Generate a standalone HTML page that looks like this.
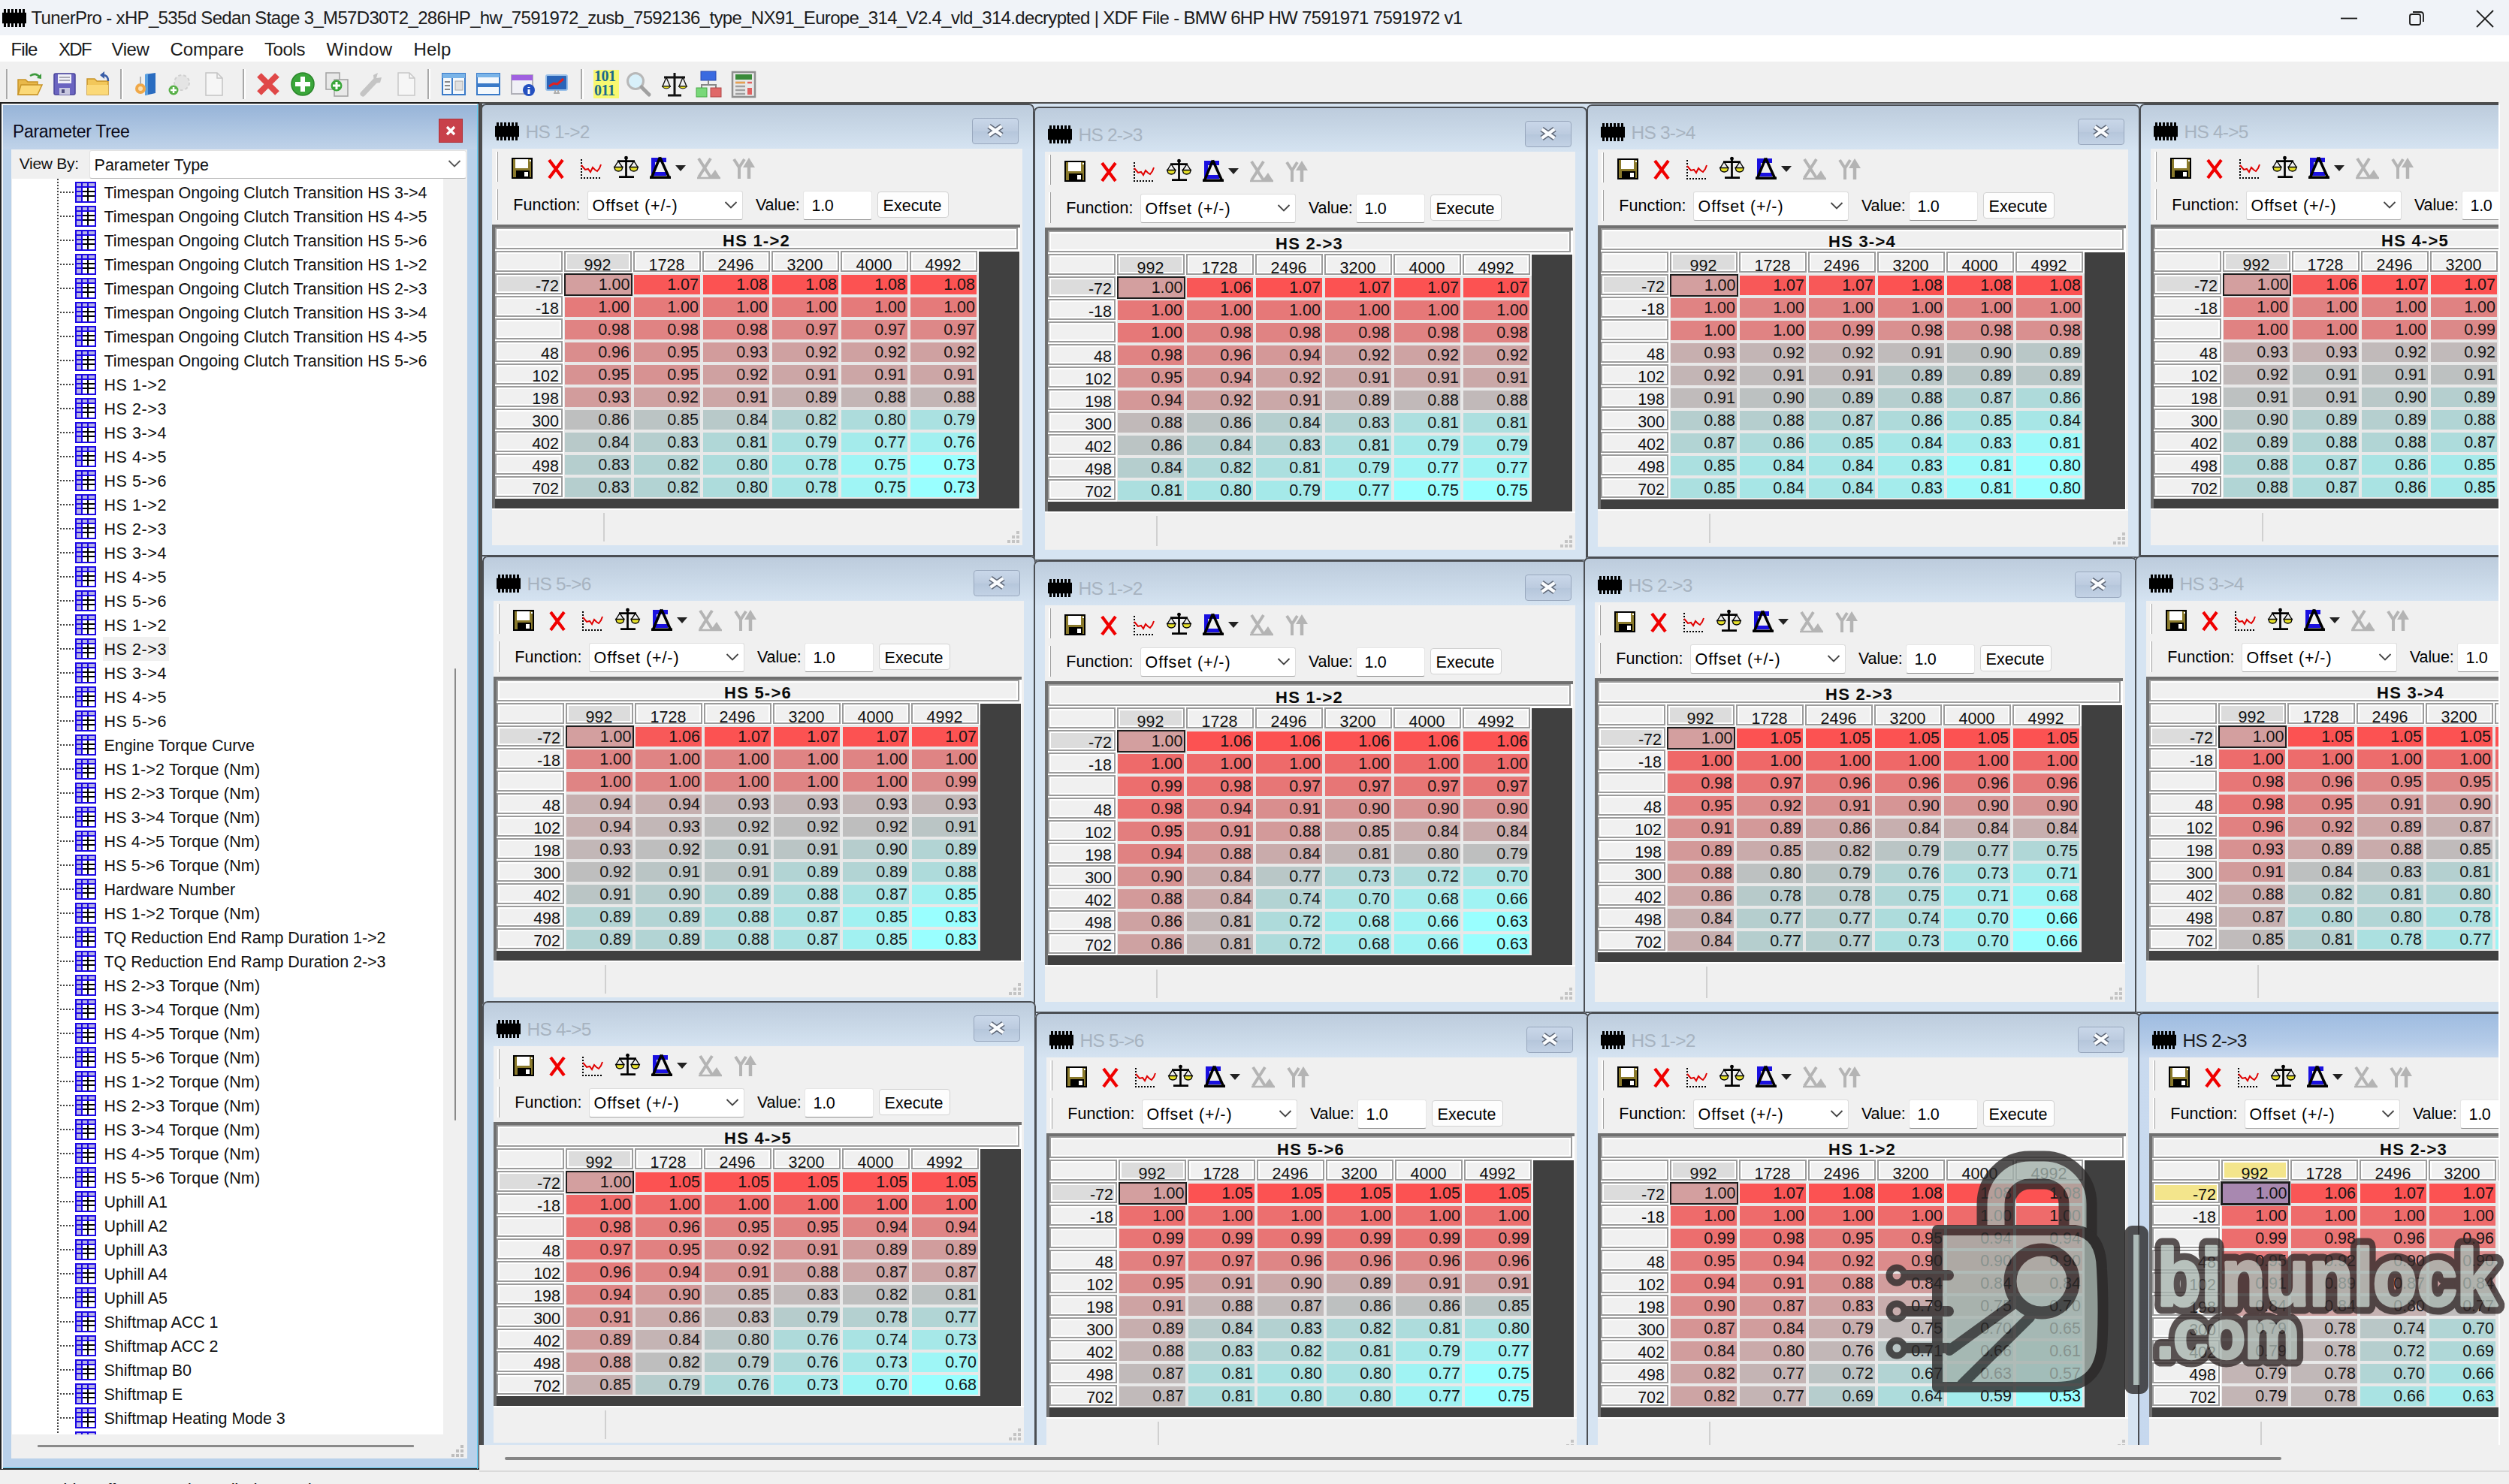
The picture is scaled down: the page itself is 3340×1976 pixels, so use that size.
<!DOCTYPE html><html><head><meta charset="utf-8"><title>TunerPro</title><style>
html,body{margin:0;padding:0;}
body{width:3340px;height:1976px;overflow:hidden;background:#f0f0f0;position:relative;font-family:"Liberation Sans",sans-serif;color:#111;}
div,svg,span.t,i,b{position:absolute;}
span.t{white-space:pre;line-height:1;}
svg{overflow:visible;}
.cw{width:737px;overflow:hidden;border-radius:7px 7px 0 0;background:linear-gradient(#bccbdc 0,#cad9e8 35px,#d6e4f2 62px,#d6e4f2 100%);}
.cw.act{background:linear-gradient(#9dbbe0 0,#b4cbe8 40px,#c9daef 62px,#c6d8ee 100%);}
.bd{left:0;top:0;right:0;bottom:0;border:2px solid #4b4e53;border-radius:7px 7px 0 0;}
.xb{left:653.5px;top:18.5px;width:62px;height:35px;border:1.5px solid #98a7bd;border-radius:4px;box-sizing:border-box;background:linear-gradient(#c9d7e9,#bccbdf 50%,#b5c6db 51%,#c3d2e5);}
.cl{left:15px;top:60px;width:706px;background:#f0f0f0;overflow:hidden;}
.gp{left:5px;width:2px;background:#fff;border-right:1.5px solid #a0a0a0;}
.cb{left:127px;top:56px;width:206.5px;height:38.5px;background:#fff;border:1px solid #dcdcdc;border-bottom-color:#a8a8a8;border-radius:3px;box-sizing:border-box;}
.vi{left:413.5px;top:55.6px;width:92px;height:39.4px;background:#fff;border:1px solid #e6e6e6;border-bottom:1.5px solid #909090;border-radius:3px;box-sizing:border-box;}
.eb{left:513.2px;top:56.8px;width:95px;height:35.2px;background:#fdfdfd;border:1px solid #d2d2d2;border-radius:4px;box-sizing:border-box;}
.tf{left:0;top:100.5px;width:702.5px;height:378px;background:#fff;border-top:4px solid #707070;border-left:4px solid #707070;box-sizing:border-box;}
.dg{left:95.5px;top:164.5px;width:552px;height:301.5px;background:#e8e8e8;}
.dk1{left:647.5px;top:137px;width:54px;height:341.5px;background:#404040;}
.dk2{left:3.5px;top:466px;width:698px;height:12.5px;background:#404040;}
.tc{left:3.5px;top:104.5px;width:696px;height:29.5px;background:#f0f0f0;border:2px solid #9c9c9c;box-shadow:inset 0 0 0 2px #fff;box-sizing:border-box;}
.rw{left:0;width:647px;height:28px;}
.h{width:90px;height:28px;background:#f0f0f0;border:2px solid #9c9c9c;box-shadow:inset 0 0 0 2px #fff;box-sizing:border-box;overflow:hidden;font-size:21.5px;}
.h b{font-weight:normal;left:0;right:0;top:2px;line-height:26px;text-align:center;white-space:pre;}
.rh{left:3.5px;width:90px;}
.rh b{text-align:right;right:2.5px;top:2px;}
.sel{background:#dcdcdc;}
.act .sel{background:#f3e58c;}
.c{top:2px;width:86.3px;padding-right:2.2px;height:26px;line-height:26px;font-size:21.5px;font-style:normal;text-align:right;color:#151515;white-space:pre;}
.k0{left:96.7px}.k1{left:188.7px}.k2{left:280.7px}.k3{left:372.7px}.k4{left:464.7px}.k5{left:556.7px}
.h.k0{left:95.5px}.h.k1{left:187.5px}.h.k2{left:279.5px}.h.k3{left:371.5px}.h.k4{left:463.5px}.h.k5{left:555.5px}
.sc{left:95.7px;top:0;width:87px;height:25.6px;line-height:26px;padding-right:2px;width:85.8px;background:#d39f9f;border:2px solid #1e1e1e;}
.act .sc{background:#a888b0;border:3px solid #1e1e1e;left:94.7px;top:-1px;line-height:26px;}
.sb1{left:0;top:479px;width:706px;height:1.5px;background:#fff;}
.sb2{left:148px;top:485px;width:1.5px;background:#d0d0d0;}
.ti{width:28px;height:28px;background:linear-gradient(#fff,#fff) 10px 8px/6px 4px no-repeat,linear-gradient(#fff,#fff) 18px 8px/8px 4px no-repeat,linear-gradient(#fff,#fff) 10px 14px/6px 4px no-repeat,linear-gradient(#fff,#fff) 18px 14px/8px 4px no-repeat,linear-gradient(#fff,#fff) 10px 20px/6px 6px no-repeat,linear-gradient(#fff,#fff) 18px 20px/8px 6px no-repeat,linear-gradient(#b6b2e8,#b6b2e8) 2px 2px/6px 4px no-repeat,linear-gradient(#b6b2e8,#b6b2e8) 10px 2px/6px 4px no-repeat,linear-gradient(#b6b2e8,#b6b2e8) 18px 2px/8px 4px no-repeat,linear-gradient(#b6b2e8,#b6b2e8) 2px 8px/6px 4px no-repeat,linear-gradient(#b6b2e8,#b6b2e8) 2px 14px/6px 4px no-repeat,linear-gradient(#b6b2e8,#b6b2e8) 2px 20px/6px 6px no-repeat,linear-gradient(#000,#000) 10px 8px/16px 18px no-repeat,#1c08e4;}</style></head><body><div style="left:0.0px;top:0.0px;width:3340.0px;height:47.0px;background:#f0f3f8;"></div>
<svg style="left:2.5px;top:11.5px;" width="32" height="24" viewBox="0 0 32 24"><rect x="2.0" y="0" width="3.0" height="24" fill="#000"/><rect x="7.0" y="0" width="3.0" height="24" fill="#000"/><rect x="12.0" y="0" width="3.0" height="24" fill="#000"/><rect x="17.0" y="0" width="3.0" height="24" fill="#000"/><rect x="22.0" y="0" width="3.0" height="24" fill="#000"/><rect x="27.0" y="0" width="3.0" height="24" fill="#000"/><rect x="0" y="4.8" width="32" height="14.4" fill="#000"/></svg>
<span class="t" style="left:41.5px;top:12px;font-size:24px;color:#1a1a1a;letter-spacing:-0.67px;">TunerPro - xHP_535d Sedan Stage 3_M57D30T2_286HP_hw_7591972_zusb_7592136_type_NX91_Europe_314_V2.4_vld_314.decrypted | XDF File - BMW 6HP HW 7591971 7591972 v1</span>
<svg style="left:3112.0px;top:10.0px;" width="30" height="30" viewBox="0 0 30 30"><path d="M4 14.5 H26" stroke="#1a1a1a" stroke-width="1.8"/></svg>
<svg style="left:3202.0px;top:10.0px;" width="30" height="30" viewBox="0 0 30 30"><rect x="6" y="9" width="14" height="14" rx="2.5" fill="none" stroke="#1a1a1a" stroke-width="1.8"/><path d="M10 6 H20 Q24 6 24 10 V19" fill="none" stroke="#1a1a1a" stroke-width="1.8"/></svg>
<svg style="left:3293.0px;top:10.0px;" width="30" height="30" viewBox="0 0 30 30"><path d="M4 4 L26 26 M26 4 L4 26" stroke="#1a1a1a" stroke-width="1.8"/></svg>
<div style="left:0.0px;top:47.0px;width:3340.0px;height:35.0px;background:#ffffff;"></div>
<span class="t" style="left:14.5px;top:54px;font-size:24px;color:#1a1a1a;letter-spacing:-0.92px;">File</span>
<span class="t" style="left:78.0px;top:54px;font-size:24px;color:#1a1a1a;letter-spacing:-1.67px;">XDF</span>
<span class="t" style="left:148.5px;top:54px;font-size:24px;color:#1a1a1a;letter-spacing:-0.40px;">View</span>
<span class="t" style="left:226.5px;top:54px;font-size:24px;color:#1a1a1a;letter-spacing:-0.10px;">Compare</span>
<span class="t" style="left:352.0px;top:54px;font-size:24px;color:#1a1a1a;letter-spacing:-0.41px;">Tools</span>
<span class="t" style="left:434.5px;top:54px;font-size:24px;color:#1a1a1a;letter-spacing:0.44px;">Window</span>
<span class="t" style="left:550.5px;top:54px;font-size:24px;color:#1a1a1a;letter-spacing:0.16px;">Help</span>
<div style="left:0.0px;top:82.0px;width:3340.0px;height:54.0px;background:#f0f0f0;"></div>
<svg style="left:21.5px;top:94.0px;" width="36" height="36" viewBox="0 0 36 36"><path d="M2 12 H12 L15 15 H28 V32 H2 Z" fill="#e8b84a" stroke="#c89428" stroke-width="1.5"/><path d="M6 19 H34 L28 32 H2 Z" fill="#fbd978" stroke="#c89428" stroke-width="1.5"/><path d="M18 7 Q26 2 31 9" stroke="#3c9a3c" stroke-width="2.5" fill="none"/><path d="M27 10 L33 11 L33 4 Z" fill="#3c9a3c"/></svg>
<svg style="left:67.5px;top:94.0px;" width="36" height="36" viewBox="0 0 36 36"><rect x="4" y="4" width="28" height="28" rx="2" fill="#6a64c0" stroke="#4a449a" stroke-width="1.5"/><rect x="9" y="5" width="18" height="12" fill="#f0f0f8"/><path d="M11 9 H25 M11 13 H25" stroke="#9090a0" stroke-width="1.5"/><rect x="11" y="23" width="14" height="9" fill="#c8c8e0"/><rect x="14" y="25" width="4" height="5" fill="#505080"/></svg>
<svg style="left:113.5px;top:94.0px;" width="36" height="36" viewBox="0 0 36 36"><path d="M2 11 H12 L15 14 H30 V32 H2 Z" fill="#f2c75a" stroke="#c89428" stroke-width="1.5"/><path d="M2 19 H30 V32 H2 Z" fill="#fbd978"/><path d="M30 14 Q30 6 23 6" stroke="#3a5ea8" stroke-width="2.5" fill="none"/><path d="M25 1 L19 6 L25 11 Z" fill="#3a5ea8"/></svg>
<svg style="left:177.0px;top:94.0px;" width="36" height="36" viewBox="0 0 36 36"><path d="M16 5 L30 3 V30 L16 33 Z" fill="#2a6cc0"/><path d="M16 5 L20 4 V32 L16 33 Z" fill="#5aa0e0"/><circle cx="10" cy="24" r="7" fill="#f0a848"/><circle cx="10" cy="24" r="3" fill="#fbe0b0"/><path d="M10 8 V18" stroke="#b0b0b0" stroke-width="2"/></svg>
<svg style="left:221.0px;top:94.0px;" width="36" height="36" viewBox="0 0 36 36"><circle cx="21" cy="16" r="10" fill="#e4e4e4" stroke="#d0d0d0" stroke-width="2" stroke-dasharray="4 3"/><circle cx="10" cy="26" r="6.5" fill="#58b048"/><path d="M10 22 V30 M6 26 H14" stroke="#fff" stroke-width="2.5"/></svg>
<svg style="left:267.0px;top:94.0px;" width="36" height="36" viewBox="0 0 36 36"><path d="M7 3 H22 L29 10 V33 H7 Z" fill="#f6f6f6" stroke="#c4c4c4" stroke-width="1.5"/><path d="M22 3 V10 H29" fill="none" stroke="#c4c4c4" stroke-width="1.5"/></svg>
<svg style="left:339.0px;top:94.0px;" width="36" height="36" viewBox="0 0 36 36"><path d="M6 6 L30 30 M30 6 L6 30" stroke="#e04848" stroke-width="8" stroke-linecap="butt"/></svg>
<svg style="left:385.0px;top:94.0px;" width="36" height="36" viewBox="0 0 36 36"><circle cx="18" cy="18" r="15" fill="#3aa63a" stroke="#2a862a" stroke-width="1.5"/><path d="M18 8 V28 M8 18 H28" stroke="#fff" stroke-width="6"/></svg>
<svg style="left:431.0px;top:94.0px;" width="36" height="36" viewBox="0 0 36 36"><rect x="3" y="3" width="18" height="22" fill="#e8e8e8" stroke="#a0a0a0" stroke-width="1.5"/><rect x="14" y="12" width="18" height="22" fill="#e8e8e8" stroke="#a0a0a0" stroke-width="1.5"/><circle cx="17" cy="20" r="7.5" fill="#3aa63a"/><path d="M17 15 V25 M12 20 H22" stroke="#fff" stroke-width="3"/></svg>
<svg style="left:477.0px;top:94.0px;" width="36" height="36" viewBox="0 0 36 36"><path d="M6 31 L22 14" stroke="#c4c4c4" stroke-width="7" stroke-linecap="round"/><path d="M20 6 L26 3 L24 10 L31 9 L29 16 L21 17 Z" fill="#c4c4c4"/></svg>
<svg style="left:523.0px;top:94.0px;" width="36" height="36" viewBox="0 0 36 36"><path d="M7 3 H22 L29 10 V33 H7 Z" fill="#f6f6f6" stroke="#c8c8c8" stroke-width="1.5"/><path d="M22 3 V10 H29" fill="none" stroke="#c8c8c8" stroke-width="1.5"/></svg>
<svg style="left:586.0px;top:94.0px;" width="36" height="36" viewBox="0 0 36 36"><rect x="3" y="4" width="30" height="28" fill="#f4f8fc" stroke="#3a7ac8" stroke-width="2"/><rect x="3" y="4" width="30" height="6" fill="#7ab4e8"/><path d="M16 10 V32" stroke="#3a7ac8" stroke-width="2"/><path d="M6 15 H13 M6 20 H13 M6 25 H13" stroke="#888" stroke-width="2"/><rect x="20" y="14" width="10" height="12" fill="#e0e0e0" stroke="#aaa"/></svg>
<svg style="left:632.0px;top:94.0px;" width="36" height="36" viewBox="0 0 36 36"><rect x="3" y="4" width="30" height="28" fill="#f4f8fc" stroke="#3a7ac8" stroke-width="2"/><rect x="3" y="4" width="30" height="5" fill="#7ab4e8"/><rect x="3" y="17" width="30" height="5" fill="#3a7ac8"/></svg>
<svg style="left:678.0px;top:94.0px;" width="36" height="36" viewBox="0 0 36 36"><rect x="3" y="6" width="28" height="25" fill="#f0f0f6" stroke="#b0b0b8" stroke-width="2"/><rect x="3" y="6" width="28" height="7" fill="#a060e0"/><circle cx="26" cy="26" r="8" fill="#2450c0"/><path d="M26 22 V23 M26 25 V31" stroke="#fff" stroke-width="3"/></svg>
<svg style="left:723.0px;top:94.0px;" width="36" height="36" viewBox="0 0 36 36"><rect x="4" y="6" width="28" height="20" rx="2" fill="#2a64b8" stroke="#9ac0e8" stroke-width="2"/><path d="M8 21 L14 17 L19 18 L27 11" stroke="#e02020" stroke-width="3" fill="none"/><path d="M14 30 H22 M16 26 V30 M20 26 V30" stroke="#b0b0b0" stroke-width="2"/></svg>
<div style="left:790px;top:93px;width:34px;height:38px;background:#f8f870;"></div>
<span class="t" style="left:791px;top:92px;font-size:20px;line-height:19px;font-family:'Liberation Serif',serif;font-weight:bold;color:#1a6a8a;letter-spacing:-0.5px;">101<br>011</span>
<svg style="left:832.0px;top:94.0px;" width="36" height="36" viewBox="0 0 36 36"><circle cx="14" cy="14" r="10.5" fill="#d8f0fa" stroke="#b8b8b8" stroke-width="3"/><path d="M22 22 L32 32" stroke="#a0a0a0" stroke-width="5" stroke-linecap="round"/></svg>
<svg style="left:880.0px;top:94.0px;" width="36" height="36" viewBox="0 0 36 36"><path d="M18 3 V32 M9 33 H27 M4 9 H32" stroke="#111" stroke-width="3" fill="none"/><path d="M7 9 L2 21 H12 Z M29 9 L24 21 H34 Z" stroke="#111" stroke-width="1.4" fill="none"/><path d="M1 21 H13 Q7 27 1 21 Z M23 21 H35 Q29 27 23 21 Z" fill="#e8e020" stroke="#111" stroke-width="1"/></svg>
<svg style="left:925.0px;top:94.0px;" width="36" height="36" viewBox="0 0 36 36"><rect x="8" y="1" width="20" height="12" fill="#3a6ae0" stroke="#2a4ab0"/><path d="M18 13 V19 M9 24 V19 H28 V24" stroke="#888" stroke-width="2" fill="none"/><rect x="2" y="23" width="14" height="12" fill="#78d878" stroke="#48a848"/><rect x="21" y="23" width="14" height="12" fill="#e06868" stroke="#b04848"/></svg>
<svg style="left:972.0px;top:94.0px;" width="36" height="36" viewBox="0 0 36 36"><rect x="3" y="2" width="30" height="33" fill="#e8e8e8" stroke="#909090" stroke-width="2.5"/><rect x="7" y="5" width="22" height="7" fill="#3a8a3a"/><path d="M7 16 H20 M7 21 H20 M7 26 H20 M7 31 H20" stroke="#a0a0a0" stroke-width="2.5"/><path d="M7 16 H20" stroke="#e8a050" stroke-width="2.5"/><rect x="23" y="23" width="6" height="9" fill="#e06060"/><path d="M23 16 H29" stroke="#e06060" stroke-width="2.5"/></svg>
<div style="left:7.5px;top:92.0px;width:2.0px;height:40.0px;background:#a8a8a8;"></div>
<div style="left:9.5px;top:92.0px;width:1.5px;height:40.0px;background:#fff;"></div>
<div style="left:160.0px;top:92.0px;width:2.0px;height:40.0px;background:#a8a8a8;"></div>
<div style="left:162.0px;top:92.0px;width:1.5px;height:40.0px;background:#fff;"></div>
<div style="left:323.0px;top:92.0px;width:2.0px;height:40.0px;background:#a8a8a8;"></div>
<div style="left:325.0px;top:92.0px;width:1.5px;height:40.0px;background:#fff;"></div>
<div style="left:569.0px;top:92.0px;width:2.0px;height:40.0px;background:#a8a8a8;"></div>
<div style="left:571.0px;top:92.0px;width:1.5px;height:40.0px;background:#fff;"></div>
<div style="left:773.0px;top:92.0px;width:2.0px;height:40.0px;background:#a8a8a8;"></div>
<div style="left:775.0px;top:92.0px;width:1.5px;height:40.0px;background:#fff;"></div>
<div style="left:0.0px;top:136.0px;width:638.0px;height:2.0px;background:#1c1c1c;"></div>
<div style="left:638.0px;top:136.0px;width:2688.0px;height:2.0px;background:#4c4c4c;"></div>
<div style="left:3326.0px;top:136.0px;width:14.0px;height:2.0px;background:#f0f0f0;"></div>
<div style="left:0.0px;top:138.0px;width:637.5px;height:1819.0px;background:#b9d1ea;"></div>
<div style="left:0.0px;top:138.0px;width:2.0px;height:1819.0px;background:#222;"></div>
<div style="left:0.0px;top:1955.3px;width:638.0px;height:1.7px;background:#222;"></div>
<div style="left:3.5px;top:1953.8px;width:632.0px;height:1.5px;background:#58c8ec;"></div>
<div style="left:2.0px;top:138.0px;width:634.0px;height:1.5px;background:#f4f8fc;"></div>
<div style="left:2.0px;top:139.5px;width:1.5px;height:1816.0px;background:#f4f8fc;"></div>
<div style="left:3.5px;top:139.5px;width:632.0px;height:59.0px;background:linear-gradient(#97b4d8,#a9c2e0 45%,#c0d3e9);"></div>
<div style="left:635.2px;top:139.0px;width:1.3px;height:1817.0px;background:#58c8ec;"></div>
<div style="left:636.5px;top:138.0px;width:1.5px;height:1819.0px;background:#222;"></div>
<span class="t" style="left:17.0px;top:164px;font-size:23px;color:#0a0a1a;letter-spacing:-0.31px;">Parameter Tree</span>
<div style="left:584.0px;top:158.0px;width:32.0px;height:32.0px;background:#c8414a;border:1px solid #b03038;box-sizing:border-box;"></div>
<svg style="left:592.0px;top:166.0px;" width="16" height="16" viewBox="0 0 16 16"><path d="M3 3 L13 13 M13 3 L3 13" stroke="#fff" stroke-width="3.2"/></svg>
<div style="left:14.5px;top:198.5px;width:607.5px;height:1743.0px;background:#f0f0f0;"></div>
<span class="t" style="left:25.7px;top:207px;font-size:21px;letter-spacing:-0.29px;">View By:</span>
<div style="left:118.5px;top:200.0px;width:502.0px;height:38.0px;background:#fff;border:1px solid #e2e2e2;border-bottom-color:#b8b8b8;box-sizing:border-box;border-radius:3px;"></div>
<span class="t" style="left:125.6px;top:210px;font-size:21.5px;letter-spacing:-0.01px;">Parameter Type</span>
<svg style="left:596.0px;top:212.0px;" width="18" height="12" viewBox="0 0 18 12"><path d="M1.5 2 L9 9.5 L16.5 2" stroke="#555" stroke-width="1.8" fill="none"/></svg>
<div class="tree" style="left:16.0px;top:238.0px;width:574.0px;height:1672.0px;background:#fff;overflow:hidden;"></div>
<div style="left:76.0px;top:238.0px;width:2.0px;height:1672.0px;background:repeating-linear-gradient(#444 0 2px,transparent 2px 4px);"></div>
<div style="left:80.0px;top:255.0px;width:18.0px;height:2.0px;background:repeating-linear-gradient(90deg,#444 0 2px,transparent 2px 4px);"></div>
<div class="ti" style="left:100px;top:242px"></div>
<span class="t" style="left:138.5px;top:247px;font-size:21.5px;letter-spacing:-0.06px;">Timespan Ongoing Clutch Transition HS 3-&gt;4</span>
<div style="left:80.0px;top:287.0px;width:18.0px;height:2.0px;background:repeating-linear-gradient(90deg,#444 0 2px,transparent 2px 4px);"></div>
<div class="ti" style="left:100px;top:274px"></div>
<span class="t" style="left:138.5px;top:279px;font-size:21.5px;letter-spacing:-0.06px;">Timespan Ongoing Clutch Transition HS 4-&gt;5</span>
<div style="left:80.0px;top:319.0px;width:18.0px;height:2.0px;background:repeating-linear-gradient(90deg,#444 0 2px,transparent 2px 4px);"></div>
<div class="ti" style="left:100px;top:306px"></div>
<span class="t" style="left:138.5px;top:311px;font-size:21.5px;letter-spacing:-0.06px;">Timespan Ongoing Clutch Transition HS 5-&gt;6</span>
<div style="left:80.0px;top:351.0px;width:18.0px;height:2.0px;background:repeating-linear-gradient(90deg,#444 0 2px,transparent 2px 4px);"></div>
<div class="ti" style="left:100px;top:338px"></div>
<span class="t" style="left:138.5px;top:343px;font-size:21.5px;letter-spacing:-0.06px;">Timespan Ongoing Clutch Transition HS 1-&gt;2</span>
<div style="left:80.0px;top:383.0px;width:18.0px;height:2.0px;background:repeating-linear-gradient(90deg,#444 0 2px,transparent 2px 4px);"></div>
<div class="ti" style="left:100px;top:370px"></div>
<span class="t" style="left:138.5px;top:375px;font-size:21.5px;letter-spacing:-0.06px;">Timespan Ongoing Clutch Transition HS 2-&gt;3</span>
<div style="left:80.0px;top:415.0px;width:18.0px;height:2.0px;background:repeating-linear-gradient(90deg,#444 0 2px,transparent 2px 4px);"></div>
<div class="ti" style="left:100px;top:402px"></div>
<span class="t" style="left:138.5px;top:407px;font-size:21.5px;letter-spacing:-0.06px;">Timespan Ongoing Clutch Transition HS 3-&gt;4</span>
<div style="left:80.0px;top:447.0px;width:18.0px;height:2.0px;background:repeating-linear-gradient(90deg,#444 0 2px,transparent 2px 4px);"></div>
<div class="ti" style="left:100px;top:434px"></div>
<span class="t" style="left:138.5px;top:439px;font-size:21.5px;letter-spacing:-0.06px;">Timespan Ongoing Clutch Transition HS 4-&gt;5</span>
<div style="left:80.0px;top:479.0px;width:18.0px;height:2.0px;background:repeating-linear-gradient(90deg,#444 0 2px,transparent 2px 4px);"></div>
<div class="ti" style="left:100px;top:466px"></div>
<span class="t" style="left:138.5px;top:471px;font-size:21.5px;letter-spacing:-0.06px;">Timespan Ongoing Clutch Transition HS 5-&gt;6</span>
<div style="left:80.0px;top:511.0px;width:18.0px;height:2.0px;background:repeating-linear-gradient(90deg,#444 0 2px,transparent 2px 4px);"></div>
<div class="ti" style="left:100px;top:498px"></div>
<span class="t" style="left:138.5px;top:503px;font-size:21.5px;letter-spacing:0.57px;">HS 1-&gt;2</span>
<div style="left:80.0px;top:543.0px;width:18.0px;height:2.0px;background:repeating-linear-gradient(90deg,#444 0 2px,transparent 2px 4px);"></div>
<div class="ti" style="left:100px;top:530px"></div>
<span class="t" style="left:138.5px;top:535px;font-size:21.5px;letter-spacing:0.57px;">HS 2-&gt;3</span>
<div style="left:80.0px;top:575.0px;width:18.0px;height:2.0px;background:repeating-linear-gradient(90deg,#444 0 2px,transparent 2px 4px);"></div>
<div class="ti" style="left:100px;top:562px"></div>
<span class="t" style="left:138.5px;top:567px;font-size:21.5px;letter-spacing:0.57px;">HS 3-&gt;4</span>
<div style="left:80.0px;top:607.0px;width:18.0px;height:2.0px;background:repeating-linear-gradient(90deg,#444 0 2px,transparent 2px 4px);"></div>
<div class="ti" style="left:100px;top:594px"></div>
<span class="t" style="left:138.5px;top:599px;font-size:21.5px;letter-spacing:0.57px;">HS 4-&gt;5</span>
<div style="left:80.0px;top:639.0px;width:18.0px;height:2.0px;background:repeating-linear-gradient(90deg,#444 0 2px,transparent 2px 4px);"></div>
<div class="ti" style="left:100px;top:626px"></div>
<span class="t" style="left:138.5px;top:631px;font-size:21.5px;letter-spacing:0.57px;">HS 5-&gt;6</span>
<div style="left:80.0px;top:671.0px;width:18.0px;height:2.0px;background:repeating-linear-gradient(90deg,#444 0 2px,transparent 2px 4px);"></div>
<div class="ti" style="left:100px;top:658px"></div>
<span class="t" style="left:138.5px;top:663px;font-size:21.5px;letter-spacing:0.57px;">HS 1-&gt;2</span>
<div style="left:80.0px;top:703.0px;width:18.0px;height:2.0px;background:repeating-linear-gradient(90deg,#444 0 2px,transparent 2px 4px);"></div>
<div class="ti" style="left:100px;top:690px"></div>
<span class="t" style="left:138.5px;top:695px;font-size:21.5px;letter-spacing:0.57px;">HS 2-&gt;3</span>
<div style="left:80.0px;top:735.0px;width:18.0px;height:2.0px;background:repeating-linear-gradient(90deg,#444 0 2px,transparent 2px 4px);"></div>
<div class="ti" style="left:100px;top:722px"></div>
<span class="t" style="left:138.5px;top:727px;font-size:21.5px;letter-spacing:0.57px;">HS 3-&gt;4</span>
<div style="left:80.0px;top:767.0px;width:18.0px;height:2.0px;background:repeating-linear-gradient(90deg,#444 0 2px,transparent 2px 4px);"></div>
<div class="ti" style="left:100px;top:754px"></div>
<span class="t" style="left:138.5px;top:759px;font-size:21.5px;letter-spacing:0.57px;">HS 4-&gt;5</span>
<div style="left:80.0px;top:799.0px;width:18.0px;height:2.0px;background:repeating-linear-gradient(90deg,#444 0 2px,transparent 2px 4px);"></div>
<div class="ti" style="left:100px;top:786px"></div>
<span class="t" style="left:138.5px;top:791px;font-size:21.5px;letter-spacing:0.57px;">HS 5-&gt;6</span>
<div style="left:80.0px;top:831.0px;width:18.0px;height:2.0px;background:repeating-linear-gradient(90deg,#444 0 2px,transparent 2px 4px);"></div>
<div class="ti" style="left:100px;top:818px"></div>
<span class="t" style="left:138.5px;top:823px;font-size:21.5px;letter-spacing:0.57px;">HS 1-&gt;2</span>
<div style="left:80.0px;top:863.0px;width:18.0px;height:2.0px;background:repeating-linear-gradient(90deg,#444 0 2px,transparent 2px 4px);"></div>
<div style="left:137.0px;top:848.0px;width:88.0px;height:32.0px;background:#f0f0f0;"></div>
<div class="ti" style="left:100px;top:850px"></div>
<span class="t" style="left:138.5px;top:855px;font-size:21.5px;letter-spacing:0.57px;">HS 2-&gt;3</span>
<div style="left:80.0px;top:895.0px;width:18.0px;height:2.0px;background:repeating-linear-gradient(90deg,#444 0 2px,transparent 2px 4px);"></div>
<div class="ti" style="left:100px;top:882px"></div>
<span class="t" style="left:138.5px;top:887px;font-size:21.5px;letter-spacing:0.57px;">HS 3-&gt;4</span>
<div style="left:80.0px;top:927.0px;width:18.0px;height:2.0px;background:repeating-linear-gradient(90deg,#444 0 2px,transparent 2px 4px);"></div>
<div class="ti" style="left:100px;top:914px"></div>
<span class="t" style="left:138.5px;top:919px;font-size:21.5px;letter-spacing:0.57px;">HS 4-&gt;5</span>
<div style="left:80.0px;top:959.0px;width:18.0px;height:2.0px;background:repeating-linear-gradient(90deg,#444 0 2px,transparent 2px 4px);"></div>
<div class="ti" style="left:100px;top:946px"></div>
<span class="t" style="left:138.5px;top:951px;font-size:21.5px;letter-spacing:0.57px;">HS 5-&gt;6</span>
<div style="left:80.0px;top:991.0px;width:18.0px;height:2.0px;background:repeating-linear-gradient(90deg,#444 0 2px,transparent 2px 4px);"></div>
<div class="ti" style="left:100px;top:978px"></div>
<span class="t" style="left:138.5px;top:983px;font-size:21.5px;letter-spacing:-0.06px;">Engine Torque Curve</span>
<div style="left:80.0px;top:1023.0px;width:18.0px;height:2.0px;background:repeating-linear-gradient(90deg,#444 0 2px,transparent 2px 4px);"></div>
<div class="ti" style="left:100px;top:1010px"></div>
<span class="t" style="left:138.5px;top:1015px;font-size:21.5px;letter-spacing:0.17px;">HS 1-&gt;2 Torque (Nm)</span>
<div style="left:80.0px;top:1055.0px;width:18.0px;height:2.0px;background:repeating-linear-gradient(90deg,#444 0 2px,transparent 2px 4px);"></div>
<div class="ti" style="left:100px;top:1042px"></div>
<span class="t" style="left:138.5px;top:1047px;font-size:21.5px;letter-spacing:0.17px;">HS 2-&gt;3 Torque (Nm)</span>
<div style="left:80.0px;top:1087.0px;width:18.0px;height:2.0px;background:repeating-linear-gradient(90deg,#444 0 2px,transparent 2px 4px);"></div>
<div class="ti" style="left:100px;top:1074px"></div>
<span class="t" style="left:138.5px;top:1079px;font-size:21.5px;letter-spacing:0.17px;">HS 3-&gt;4 Torque (Nm)</span>
<div style="left:80.0px;top:1119.0px;width:18.0px;height:2.0px;background:repeating-linear-gradient(90deg,#444 0 2px,transparent 2px 4px);"></div>
<div class="ti" style="left:100px;top:1106px"></div>
<span class="t" style="left:138.5px;top:1111px;font-size:21.5px;letter-spacing:0.17px;">HS 4-&gt;5 Torque (Nm)</span>
<div style="left:80.0px;top:1151.0px;width:18.0px;height:2.0px;background:repeating-linear-gradient(90deg,#444 0 2px,transparent 2px 4px);"></div>
<div class="ti" style="left:100px;top:1138px"></div>
<span class="t" style="left:138.5px;top:1143px;font-size:21.5px;letter-spacing:0.17px;">HS 5-&gt;6 Torque (Nm)</span>
<div style="left:80.0px;top:1183.0px;width:18.0px;height:2.0px;background:repeating-linear-gradient(90deg,#444 0 2px,transparent 2px 4px);"></div>
<div class="ti" style="left:100px;top:1170px"></div>
<span class="t" style="left:138.5px;top:1175px;font-size:21.5px;letter-spacing:-0.07px;">Hardware Number</span>
<div style="left:80.0px;top:1215.0px;width:18.0px;height:2.0px;background:repeating-linear-gradient(90deg,#444 0 2px,transparent 2px 4px);"></div>
<div class="ti" style="left:100px;top:1202px"></div>
<span class="t" style="left:138.5px;top:1207px;font-size:21.5px;letter-spacing:0.17px;">HS 1-&gt;2 Torque (Nm)</span>
<div style="left:80.0px;top:1247.0px;width:18.0px;height:2.0px;background:repeating-linear-gradient(90deg,#444 0 2px,transparent 2px 4px);"></div>
<div class="ti" style="left:100px;top:1234px"></div>
<span class="t" style="left:138.5px;top:1239px;font-size:21.5px;letter-spacing:-0.06px;">TQ Reduction End Ramp Duration 1-&gt;2</span>
<div style="left:80.0px;top:1279.0px;width:18.0px;height:2.0px;background:repeating-linear-gradient(90deg,#444 0 2px,transparent 2px 4px);"></div>
<div class="ti" style="left:100px;top:1266px"></div>
<span class="t" style="left:138.5px;top:1271px;font-size:21.5px;letter-spacing:-0.06px;">TQ Reduction End Ramp Duration 2-&gt;3</span>
<div style="left:80.0px;top:1311.0px;width:18.0px;height:2.0px;background:repeating-linear-gradient(90deg,#444 0 2px,transparent 2px 4px);"></div>
<div class="ti" style="left:100px;top:1298px"></div>
<span class="t" style="left:138.5px;top:1303px;font-size:21.5px;letter-spacing:0.17px;">HS 2-&gt;3 Torque (Nm)</span>
<div style="left:80.0px;top:1343.0px;width:18.0px;height:2.0px;background:repeating-linear-gradient(90deg,#444 0 2px,transparent 2px 4px);"></div>
<div class="ti" style="left:100px;top:1330px"></div>
<span class="t" style="left:138.5px;top:1335px;font-size:21.5px;letter-spacing:0.17px;">HS 3-&gt;4 Torque (Nm)</span>
<div style="left:80.0px;top:1375.0px;width:18.0px;height:2.0px;background:repeating-linear-gradient(90deg,#444 0 2px,transparent 2px 4px);"></div>
<div class="ti" style="left:100px;top:1362px"></div>
<span class="t" style="left:138.5px;top:1367px;font-size:21.5px;letter-spacing:0.17px;">HS 4-&gt;5 Torque (Nm)</span>
<div style="left:80.0px;top:1407.0px;width:18.0px;height:2.0px;background:repeating-linear-gradient(90deg,#444 0 2px,transparent 2px 4px);"></div>
<div class="ti" style="left:100px;top:1394px"></div>
<span class="t" style="left:138.5px;top:1399px;font-size:21.5px;letter-spacing:0.17px;">HS 5-&gt;6 Torque (Nm)</span>
<div style="left:80.0px;top:1439.0px;width:18.0px;height:2.0px;background:repeating-linear-gradient(90deg,#444 0 2px,transparent 2px 4px);"></div>
<div class="ti" style="left:100px;top:1426px"></div>
<span class="t" style="left:138.5px;top:1431px;font-size:21.5px;letter-spacing:0.17px;">HS 1-&gt;2 Torque (Nm)</span>
<div style="left:80.0px;top:1471.0px;width:18.0px;height:2.0px;background:repeating-linear-gradient(90deg,#444 0 2px,transparent 2px 4px);"></div>
<div class="ti" style="left:100px;top:1458px"></div>
<span class="t" style="left:138.5px;top:1463px;font-size:21.5px;letter-spacing:0.17px;">HS 2-&gt;3 Torque (Nm)</span>
<div style="left:80.0px;top:1503.0px;width:18.0px;height:2.0px;background:repeating-linear-gradient(90deg,#444 0 2px,transparent 2px 4px);"></div>
<div class="ti" style="left:100px;top:1490px"></div>
<span class="t" style="left:138.5px;top:1495px;font-size:21.5px;letter-spacing:0.17px;">HS 3-&gt;4 Torque (Nm)</span>
<div style="left:80.0px;top:1535.0px;width:18.0px;height:2.0px;background:repeating-linear-gradient(90deg,#444 0 2px,transparent 2px 4px);"></div>
<div class="ti" style="left:100px;top:1522px"></div>
<span class="t" style="left:138.5px;top:1527px;font-size:21.5px;letter-spacing:0.17px;">HS 4-&gt;5 Torque (Nm)</span>
<div style="left:80.0px;top:1567.0px;width:18.0px;height:2.0px;background:repeating-linear-gradient(90deg,#444 0 2px,transparent 2px 4px);"></div>
<div class="ti" style="left:100px;top:1554px"></div>
<span class="t" style="left:138.5px;top:1559px;font-size:21.5px;letter-spacing:0.17px;">HS 5-&gt;6 Torque (Nm)</span>
<div style="left:80.0px;top:1599.0px;width:18.0px;height:2.0px;background:repeating-linear-gradient(90deg,#444 0 2px,transparent 2px 4px);"></div>
<div class="ti" style="left:100px;top:1586px"></div>
<span class="t" style="left:138.5px;top:1591px;font-size:21.5px;letter-spacing:-0.06px;">Uphill A1</span>
<div style="left:80.0px;top:1631.0px;width:18.0px;height:2.0px;background:repeating-linear-gradient(90deg,#444 0 2px,transparent 2px 4px);"></div>
<div class="ti" style="left:100px;top:1618px"></div>
<span class="t" style="left:138.5px;top:1623px;font-size:21.5px;letter-spacing:-0.06px;">Uphill A2</span>
<div style="left:80.0px;top:1663.0px;width:18.0px;height:2.0px;background:repeating-linear-gradient(90deg,#444 0 2px,transparent 2px 4px);"></div>
<div class="ti" style="left:100px;top:1650px"></div>
<span class="t" style="left:138.5px;top:1655px;font-size:21.5px;letter-spacing:-0.06px;">Uphill A3</span>
<div style="left:80.0px;top:1695.0px;width:18.0px;height:2.0px;background:repeating-linear-gradient(90deg,#444 0 2px,transparent 2px 4px);"></div>
<div class="ti" style="left:100px;top:1682px"></div>
<span class="t" style="left:138.5px;top:1687px;font-size:21.5px;letter-spacing:-0.06px;">Uphill A4</span>
<div style="left:80.0px;top:1727.0px;width:18.0px;height:2.0px;background:repeating-linear-gradient(90deg,#444 0 2px,transparent 2px 4px);"></div>
<div class="ti" style="left:100px;top:1714px"></div>
<span class="t" style="left:138.5px;top:1719px;font-size:21.5px;letter-spacing:-0.06px;">Uphill A5</span>
<div style="left:80.0px;top:1759.0px;width:18.0px;height:2.0px;background:repeating-linear-gradient(90deg,#444 0 2px,transparent 2px 4px);"></div>
<div class="ti" style="left:100px;top:1746px"></div>
<span class="t" style="left:138.5px;top:1751px;font-size:21.5px;letter-spacing:-0.07px;">Shiftmap ACC 1</span>
<div style="left:80.0px;top:1791.0px;width:18.0px;height:2.0px;background:repeating-linear-gradient(90deg,#444 0 2px,transparent 2px 4px);"></div>
<div class="ti" style="left:100px;top:1778px"></div>
<span class="t" style="left:138.5px;top:1783px;font-size:21.5px;letter-spacing:-0.07px;">Shiftmap ACC 2</span>
<div style="left:80.0px;top:1823.0px;width:18.0px;height:2.0px;background:repeating-linear-gradient(90deg,#444 0 2px,transparent 2px 4px);"></div>
<div class="ti" style="left:100px;top:1810px"></div>
<span class="t" style="left:138.5px;top:1815px;font-size:21.5px;letter-spacing:-0.06px;">Shiftmap B0</span>
<div style="left:80.0px;top:1855.0px;width:18.0px;height:2.0px;background:repeating-linear-gradient(90deg,#444 0 2px,transparent 2px 4px);"></div>
<div class="ti" style="left:100px;top:1842px"></div>
<span class="t" style="left:138.5px;top:1847px;font-size:21.5px;letter-spacing:-0.06px;">Shiftmap E</span>
<div style="left:80.0px;top:1887.0px;width:18.0px;height:2.0px;background:repeating-linear-gradient(90deg,#444 0 2px,transparent 2px 4px);"></div>
<div class="ti" style="left:100px;top:1874px"></div>
<span class="t" style="left:138.5px;top:1879px;font-size:21.5px;letter-spacing:-0.06px;">Shiftmap Heating Mode 3</span>
<div class="ti" style="left:100px;top:1906px;height:4px"></div>
<div style="left:604.5px;top:890.0px;width:2.5px;height:602.0px;background:#8a8a8a;border-radius:1px;"></div>
<div style="left:50.0px;top:1923.5px;width:501.0px;height:3.0px;background:#8a8a8a;border-radius:1px;"></div>
<svg style="left:601.0px;top:1924.0px;" width="16" height="16" viewBox="0 0 16 16"><rect x="12" y="0" width="4" height="4" fill="#bdbdbd"/><rect x="6" y="6" width="4" height="4" fill="#bdbdbd"/><rect x="12" y="6" width="4" height="4" fill="#bdbdbd"/><rect x="0" y="12" width="4" height="4" fill="#bdbdbd"/><rect x="6" y="12" width="4" height="4" fill="#bdbdbd"/><rect x="12" y="12" width="4" height="4" fill="#bdbdbd"/></svg>
<div id="mdi" style="left:638px;top:138px;width:2688px;height:1785.5px;overflow:hidden;background:#d5e3f1;">
<div class="cw" style="left:2px;top:0px;height:603px">
<svg style="left:18.5px;top:25.0px;" width="32" height="24" viewBox="0 0 32 24"><rect x="2.0" y="0" width="3.0" height="24" fill="#000"/><rect x="7.0" y="0" width="3.0" height="24" fill="#000"/><rect x="12.0" y="0" width="3.0" height="24" fill="#000"/><rect x="17.0" y="0" width="3.0" height="24" fill="#000"/><rect x="22.0" y="0" width="3.0" height="24" fill="#000"/><rect x="27.0" y="0" width="3.0" height="24" fill="#000"/><rect x="0" y="4.8" width="32" height="14.4" fill="#000"/></svg>
<span class="t" style="left:59.5px;top:26px;font-size:24.5px;color:#a7b3c0;letter-spacing:-0.79px;">HS 1-&gt;2</span>
<div class="xb"></div>
<svg style="left:672.5px;top:26.5px;" width="24" height="18" viewBox="0 0 24 18"><path d="M3.5 3 L20.5 15 M20.5 3 L3.5 15" stroke="#5f6878" stroke-width="7.4"/><path d="M3.5 3 L20.5 15 M20.5 3 L3.5 15" stroke="#fafcfe" stroke-width="4.2"/></svg>
<div class="cl" style="height:528px">
<div class="gp" style="top:4px;height:40px"></div><div class="gp" style="top:54px;height:41px"></div>
<svg style="left:25.5px;top:12.0px;" width="28" height="28" viewBox="0 0 28 28"><rect x="0" y="0" width="28" height="28" fill="#000"/><rect x="2" y="2" width="24" height="24" fill="#8a7a2c"/><rect x="5" y="2" width="17" height="12" fill="#fff"/><rect x="6" y="17" width="18" height="9" fill="#000"/><rect x="17" y="19" width="5" height="6" fill="#fff"/><rect x="24" y="3" width="2" height="2" fill="#fff"/></svg>
<svg style="left:73.5px;top:14.0px;" width="22" height="26" viewBox="0 0 22 26"><path d="M2 1 L20 25 M20 1 L2 25" stroke="#f00000" stroke-width="4.2" fill="none"/></svg>
<svg style="left:117.5px;top:14.0px;" width="28" height="26" viewBox="0 0 28 26"><path d="M1 0 V25 H28" stroke="#000" stroke-width="2" stroke-dasharray="2 2" fill="none"/><path d="M1 8 L6 14 L10 13 L13 17 L16 11 L19 14 L22 16 L25 12 L27 7" stroke="#e00000" stroke-width="2" fill="none"/></svg>
<svg style="left:161.5px;top:9.0px;" width="33" height="30" viewBox="0 0 33 30"><path d="M16.5 2 V28 M7 28.6 H27 M5 7.6 H28" stroke="#000" stroke-width="2.7" fill="none"/><path d="M6 7.6 L1 15.5 M6 7.6 L11.5 15.5 M27 7.6 L21.5 15.5 M27 7.6 L32 15.5" stroke="#000" stroke-width="1.4" fill="none"/><path d="M0.6 15.5 H12 L10.5 19.5 Q6.3 22.5 2.1 19.5 Z M21 15.5 H32.4 L30.9 19.5 Q26.7 22.5 22.5 19.5 Z" fill="#e6e02a" stroke="#000" stroke-width="1.3"/><circle cx="16.5" cy="3.2" r="2.4" fill="#000"/></svg>
<svg style="left:209.5px;top:10.0px;" width="28" height="30" viewBox="0 0 28 30"><path d="M2 2 H22 V8 H7 V21 H22 V26 H2 Z" fill="#1a10e0"/><path d="M13.5 1.5 L2.5 28 M13.5 1.5 L25.5 28 M0 28.3 H28" stroke="#000" stroke-width="3.5" fill="none"/></svg>
<svg style="left:243.5px;top:22.0px;" width="14" height="8" viewBox="0 0 14 8"><path d="M0 0 H14 L7 8 Z" fill="#222"/></svg>
<svg style="left:270.5px;top:12.0px;" width="34" height="29" viewBox="0 0 34 29"><path d="M4 1 L20 26 M20 1 L4 26" stroke="#b4b4b4" stroke-width="4" fill="none"/><path d="M18 27 L26 16 L33 27 Z" fill="#b4b4b4"/><path d="M2 27 H33" stroke="#b4b4b4" stroke-width="2.5"/></svg>
<svg style="left:320.0px;top:12.0px;" width="30" height="29" viewBox="0 0 30 29"><path d="M2 2 L9 13 V28 M16 2 L9 13" stroke="#b4b4b4" stroke-width="4" fill="none"/><path d="M22 28 V8" stroke="#b4b4b4" stroke-width="4.5"/><path d="M14 13 L22 0 L30 13 Z" fill="#b4b4b4"/></svg>
<span class="t" style="left:28.2px;top:65px;font-size:21.5px;color:#000;letter-spacing:0.12px;">Function:</span>
<div class="cb"></div>
<span class="t" style="left:133.5px;top:66px;font-size:21.5px;color:#000;letter-spacing:0.92px;">Offset (+/-)</span>
<svg style="left:308.5px;top:69.0px;" width="18" height="12" viewBox="0 0 18 12"><path d="M1.5 2 L9 9.5 L16.5 2" stroke="#444" stroke-width="1.8" fill="none"/></svg>
<span class="t" style="left:351.0px;top:65px;font-size:21.5px;color:#000;letter-spacing:-0.14px;">Value:</span>
<div class="vi"></div>
<span class="t" style="left:425.5px;top:66px;font-size:21.5px;color:#000;letter-spacing:-0.30px;">1.0</span>
<div class="eb"></div>
<span class="t" style="left:520.5px;top:66px;font-size:21.5px;color:#000;letter-spacing:0.04px;">Execute</span>
<div class="tf"></div><div class="dg"></div><div class="dk1"></div><div class="dk2"></div><div class="tc"></div>
<span class="t" style="left:307.0px;top:112px;font-size:22px;color:#0a0a0a;letter-spacing:1.24px;font-weight:bold;">HS 1-&gt;2</span>
<div class="h rh" style="top:136px"></div>
<div class="h k0 sel" style="top:136px"><b style="top:4px">992</b></div>
<div class="h k1" style="top:136px"><b style="top:4px">1728</b></div>
<div class="h k2" style="top:136px"><b style="top:4px">2496</b></div>
<div class="h k3" style="top:136px"><b style="top:4px">3200</b></div>
<div class="h k4" style="top:136px"><b style="top:4px">4000</b></div>
<div class="h k5" style="top:136px"><b style="top:4px">4992</b></div>
<div class="rw" style="top:166px">
<div class="h rh sel"><b>-72</b></div>
<i class="c k0 sc">1.00</i>
<i class="c k1" style="background:#f95757">1.07</i>
<i class="c k2" style="background:#fc5252">1.08</i>
<i class="c k3" style="background:#fc5252">1.08</i>
<i class="c k4" style="background:#fc5252">1.08</i>
<i class="c k5" style="background:#fc5252">1.08</i>
</div>
<div class="rw" style="top:196px">
<div class="h rh"><b>-18</b></div>
<i class="c k0" style="background:#e57a7a">1.00</i>
<i class="c k1" style="background:#e57a7a">1.00</i>
<i class="c k2" style="background:#e57a7a">1.00</i>
<i class="c k3" style="background:#e57a7a">1.00</i>
<i class="c k4" style="background:#e57a7a">1.00</i>
<i class="c k5" style="background:#e57a7a">1.00</i>
</div>
<div class="rw" style="top:226px">
<div class="h rh"><b></b></div>
<i class="c k0" style="background:#e08383">0.98</i>
<i class="c k1" style="background:#e08383">0.98</i>
<i class="c k2" style="background:#e08383">0.98</i>
<i class="c k3" style="background:#dd8888">0.97</i>
<i class="c k4" style="background:#dd8888">0.97</i>
<i class="c k5" style="background:#dd8888">0.97</i>
</div>
<div class="rw" style="top:256px">
<div class="h rh"><b>48</b></div>
<i class="c k0" style="background:#da8d8d">0.96</i>
<i class="c k1" style="background:#d79292">0.95</i>
<i class="c k2" style="background:#d29c9c">0.93</i>
<i class="c k3" style="background:#cfa1a1">0.92</i>
<i class="c k4" style="background:#cfa1a1">0.92</i>
<i class="c k5" style="background:#cfa1a1">0.92</i>
</div>
<div class="rw" style="top:286px">
<div class="h rh"><b>102</b></div>
<i class="c k0" style="background:#d79292">0.95</i>
<i class="c k1" style="background:#d79292">0.95</i>
<i class="c k2" style="background:#cfa1a1">0.92</i>
<i class="c k3" style="background:#cca6a6">0.91</i>
<i class="c k4" style="background:#cca6a6">0.91</i>
<i class="c k5" style="background:#cca6a6">0.91</i>
</div>
<div class="rw" style="top:316px">
<div class="h rh"><b>198</b></div>
<i class="c k0" style="background:#d29c9c">0.93</i>
<i class="c k1" style="background:#cfa1a1">0.92</i>
<i class="c k2" style="background:#cca6a6">0.91</i>
<i class="c k3" style="background:#c6b0b0">0.89</i>
<i class="c k4" style="background:#c3b5b5">0.88</i>
<i class="c k5" style="background:#c3b5b5">0.88</i>
</div>
<div class="rw" style="top:346px">
<div class="h rh"><b>300</b></div>
<i class="c k0" style="background:#bebfbf">0.86</i>
<i class="c k1" style="background:#bbc4c4">0.85</i>
<i class="c k2" style="background:#b8c9c9">0.84</i>
<i class="c k3" style="background:#b2d3d3">0.82</i>
<i class="c k4" style="background:#addcdc">0.80</i>
<i class="c k5" style="background:#aae1e1">0.79</i>
</div>
<div class="rw" style="top:376px">
<div class="h rh"><b>402</b></div>
<i class="c k0" style="background:#b8c9c9">0.84</i>
<i class="c k1" style="background:#b5cece">0.83</i>
<i class="c k2" style="background:#b0d7d7">0.81</i>
<i class="c k3" style="background:#aae1e1">0.79</i>
<i class="c k4" style="background:#a4ebeb">0.77</i>
<i class="c k5" style="background:#a1f0f0">0.76</i>
</div>
<div class="rw" style="top:406px">
<div class="h rh"><b>498</b></div>
<i class="c k0" style="background:#b5cece">0.83</i>
<i class="c k1" style="background:#b2d3d3">0.82</i>
<i class="c k2" style="background:#addcdc">0.80</i>
<i class="c k3" style="background:#a7e6e6">0.78</i>
<i class="c k4" style="background:#9ff5f5">0.75</i>
<i class="c k5" style="background:#99ffff">0.73</i>
</div>
<div class="rw" style="top:436px">
<div class="h rh"><b>702</b></div>
<i class="c k0" style="background:#b5cece">0.83</i>
<i class="c k1" style="background:#b2d3d3">0.82</i>
<i class="c k2" style="background:#addcdc">0.80</i>
<i class="c k3" style="background:#a7e6e6">0.78</i>
<i class="c k4" style="background:#9ff5f5">0.75</i>
<i class="c k5" style="background:#99ffff">0.73</i>
</div>
<div class="sb1"></div><div class="sb2" style="height:38px"></div>
<svg style="left:686.0px;top:509.0px;" width="16" height="16" viewBox="0 0 16 16"><rect x="12" y="0" width="4" height="4" fill="#c4c4c4"/><rect x="6" y="6" width="4" height="4" fill="#c4c4c4"/><rect x="12" y="6" width="4" height="4" fill="#c4c4c4"/><rect x="0" y="12" width="4" height="4" fill="#c4c4c4"/><rect x="6" y="12" width="4" height="4" fill="#c4c4c4"/><rect x="12" y="12" width="4" height="4" fill="#c4c4c4"/></svg>
</div>
<div class="bd"></div>
</div>
<div class="cw" style="left:738px;top:4px;height:605px">
<svg style="left:18.5px;top:25.0px;" width="32" height="24" viewBox="0 0 32 24"><rect x="2.0" y="0" width="3.0" height="24" fill="#000"/><rect x="7.0" y="0" width="3.0" height="24" fill="#000"/><rect x="12.0" y="0" width="3.0" height="24" fill="#000"/><rect x="17.0" y="0" width="3.0" height="24" fill="#000"/><rect x="22.0" y="0" width="3.0" height="24" fill="#000"/><rect x="27.0" y="0" width="3.0" height="24" fill="#000"/><rect x="0" y="4.8" width="32" height="14.4" fill="#000"/></svg>
<span class="t" style="left:59.5px;top:26px;font-size:24.5px;color:#a7b3c0;letter-spacing:-0.79px;">HS 2-&gt;3</span>
<div class="xb"></div>
<svg style="left:672.5px;top:26.5px;" width="24" height="18" viewBox="0 0 24 18"><path d="M3.5 3 L20.5 15 M20.5 3 L3.5 15" stroke="#5f6878" stroke-width="7.4"/><path d="M3.5 3 L20.5 15 M20.5 3 L3.5 15" stroke="#fafcfe" stroke-width="4.2"/></svg>
<div class="cl" style="height:530px">
<div class="gp" style="top:4px;height:40px"></div><div class="gp" style="top:54px;height:41px"></div>
<svg style="left:25.5px;top:12.0px;" width="28" height="28" viewBox="0 0 28 28"><rect x="0" y="0" width="28" height="28" fill="#000"/><rect x="2" y="2" width="24" height="24" fill="#8a7a2c"/><rect x="5" y="2" width="17" height="12" fill="#fff"/><rect x="6" y="17" width="18" height="9" fill="#000"/><rect x="17" y="19" width="5" height="6" fill="#fff"/><rect x="24" y="3" width="2" height="2" fill="#fff"/></svg>
<svg style="left:73.5px;top:14.0px;" width="22" height="26" viewBox="0 0 22 26"><path d="M2 1 L20 25 M20 1 L2 25" stroke="#f00000" stroke-width="4.2" fill="none"/></svg>
<svg style="left:117.5px;top:14.0px;" width="28" height="26" viewBox="0 0 28 26"><path d="M1 0 V25 H28" stroke="#000" stroke-width="2" stroke-dasharray="2 2" fill="none"/><path d="M1 8 L6 14 L10 13 L13 17 L16 11 L19 14 L22 16 L25 12 L27 7" stroke="#e00000" stroke-width="2" fill="none"/></svg>
<svg style="left:161.5px;top:9.0px;" width="33" height="30" viewBox="0 0 33 30"><path d="M16.5 2 V28 M7 28.6 H27 M5 7.6 H28" stroke="#000" stroke-width="2.7" fill="none"/><path d="M6 7.6 L1 15.5 M6 7.6 L11.5 15.5 M27 7.6 L21.5 15.5 M27 7.6 L32 15.5" stroke="#000" stroke-width="1.4" fill="none"/><path d="M0.6 15.5 H12 L10.5 19.5 Q6.3 22.5 2.1 19.5 Z M21 15.5 H32.4 L30.9 19.5 Q26.7 22.5 22.5 19.5 Z" fill="#e6e02a" stroke="#000" stroke-width="1.3"/><circle cx="16.5" cy="3.2" r="2.4" fill="#000"/></svg>
<svg style="left:209.5px;top:10.0px;" width="28" height="30" viewBox="0 0 28 30"><path d="M2 2 H22 V8 H7 V21 H22 V26 H2 Z" fill="#1a10e0"/><path d="M13.5 1.5 L2.5 28 M13.5 1.5 L25.5 28 M0 28.3 H28" stroke="#000" stroke-width="3.5" fill="none"/></svg>
<svg style="left:243.5px;top:22.0px;" width="14" height="8" viewBox="0 0 14 8"><path d="M0 0 H14 L7 8 Z" fill="#222"/></svg>
<svg style="left:270.5px;top:12.0px;" width="34" height="29" viewBox="0 0 34 29"><path d="M4 1 L20 26 M20 1 L4 26" stroke="#b4b4b4" stroke-width="4" fill="none"/><path d="M18 27 L26 16 L33 27 Z" fill="#b4b4b4"/><path d="M2 27 H33" stroke="#b4b4b4" stroke-width="2.5"/></svg>
<svg style="left:320.0px;top:12.0px;" width="30" height="29" viewBox="0 0 30 29"><path d="M2 2 L9 13 V28 M16 2 L9 13" stroke="#b4b4b4" stroke-width="4" fill="none"/><path d="M22 28 V8" stroke="#b4b4b4" stroke-width="4.5"/><path d="M14 13 L22 0 L30 13 Z" fill="#b4b4b4"/></svg>
<span class="t" style="left:28.2px;top:65px;font-size:21.5px;color:#000;letter-spacing:0.12px;">Function:</span>
<div class="cb"></div>
<span class="t" style="left:133.5px;top:66px;font-size:21.5px;color:#000;letter-spacing:0.92px;">Offset (+/-)</span>
<svg style="left:308.5px;top:69.0px;" width="18" height="12" viewBox="0 0 18 12"><path d="M1.5 2 L9 9.5 L16.5 2" stroke="#444" stroke-width="1.8" fill="none"/></svg>
<span class="t" style="left:351.0px;top:65px;font-size:21.5px;color:#000;letter-spacing:-0.14px;">Value:</span>
<div class="vi"></div>
<span class="t" style="left:425.5px;top:66px;font-size:21.5px;color:#000;letter-spacing:-0.30px;">1.0</span>
<div class="eb"></div>
<span class="t" style="left:520.5px;top:66px;font-size:21.5px;color:#000;letter-spacing:0.04px;">Execute</span>
<div class="tf"></div><div class="dg"></div><div class="dk1"></div><div class="dk2"></div><div class="tc"></div>
<span class="t" style="left:307.0px;top:112px;font-size:22px;color:#0a0a0a;letter-spacing:1.24px;font-weight:bold;">HS 2-&gt;3</span>
<div class="h rh" style="top:136px"></div>
<div class="h k0 sel" style="top:136px"><b style="top:4px">992</b></div>
<div class="h k1" style="top:136px"><b style="top:4px">1728</b></div>
<div class="h k2" style="top:136px"><b style="top:4px">2496</b></div>
<div class="h k3" style="top:136px"><b style="top:4px">3200</b></div>
<div class="h k4" style="top:136px"><b style="top:4px">4000</b></div>
<div class="h k5" style="top:136px"><b style="top:4px">4992</b></div>
<div class="rw" style="top:166px">
<div class="h rh sel"><b>-72</b></div>
<i class="c k0 sc">1.00</i>
<i class="c k1" style="background:#f95757">1.06</i>
<i class="c k2" style="background:#fc5252">1.07</i>
<i class="c k3" style="background:#fc5252">1.07</i>
<i class="c k4" style="background:#fc5252">1.07</i>
<i class="c k5" style="background:#fc5252">1.07</i>
</div>
<div class="rw" style="top:196px">
<div class="h rh"><b>-18</b></div>
<i class="c k0" style="background:#e67878">1.00</i>
<i class="c k1" style="background:#e67878">1.00</i>
<i class="c k2" style="background:#e67878">1.00</i>
<i class="c k3" style="background:#e67878">1.00</i>
<i class="c k4" style="background:#e67878">1.00</i>
<i class="c k5" style="background:#e67878">1.00</i>
</div>
<div class="rw" style="top:226px">
<div class="h rh"><b></b></div>
<i class="c k0" style="background:#e67878">1.00</i>
<i class="c k1" style="background:#e08383">0.98</i>
<i class="c k2" style="background:#e08383">0.98</i>
<i class="c k3" style="background:#e08383">0.98</i>
<i class="c k4" style="background:#e08383">0.98</i>
<i class="c k5" style="background:#e08383">0.98</i>
</div>
<div class="rw" style="top:256px">
<div class="h rh"><b>48</b></div>
<i class="c k0" style="background:#e08383">0.98</i>
<i class="c k1" style="background:#da8d8d">0.96</i>
<i class="c k2" style="background:#d49898">0.94</i>
<i class="c k3" style="background:#cea3a3">0.92</i>
<i class="c k4" style="background:#cea3a3">0.92</i>
<i class="c k5" style="background:#cea3a3">0.92</i>
</div>
<div class="rw" style="top:286px">
<div class="h rh"><b>102</b></div>
<i class="c k0" style="background:#d79393">0.95</i>
<i class="c k1" style="background:#d49898">0.94</i>
<i class="c k2" style="background:#cea3a3">0.92</i>
<i class="c k3" style="background:#caa8a8">0.91</i>
<i class="c k4" style="background:#caa8a8">0.91</i>
<i class="c k5" style="background:#caa8a8">0.91</i>
</div>
<div class="rw" style="top:316px">
<div class="h rh"><b>198</b></div>
<i class="c k0" style="background:#d49898">0.94</i>
<i class="c k1" style="background:#cea3a3">0.92</i>
<i class="c k2" style="background:#caa8a8">0.91</i>
<i class="c k3" style="background:#c4b3b3">0.89</i>
<i class="c k4" style="background:#c1b9b9">0.88</i>
<i class="c k5" style="background:#c1b9b9">0.88</i>
</div>
<div class="rw" style="top:346px">
<div class="h rh"><b>300</b></div>
<i class="c k0" style="background:#c1b9b9">0.88</i>
<i class="c k1" style="background:#bbc4c4">0.86</i>
<i class="c k2" style="background:#b5cece">0.84</i>
<i class="c k3" style="background:#b2d4d4">0.83</i>
<i class="c k4" style="background:#acdfdf">0.81</i>
<i class="c k5" style="background:#acdfdf">0.81</i>
</div>
<div class="rw" style="top:376px">
<div class="h rh"><b>402</b></div>
<i class="c k0" style="background:#bbc4c4">0.86</i>
<i class="c k1" style="background:#b5cece">0.84</i>
<i class="c k2" style="background:#b2d4d4">0.83</i>
<i class="c k3" style="background:#acdfdf">0.81</i>
<i class="c k4" style="background:#a5e9e9">0.79</i>
<i class="c k5" style="background:#a5e9e9">0.79</i>
</div>
<div class="rw" style="top:406px">
<div class="h rh"><b>498</b></div>
<i class="c k0" style="background:#b5cece">0.84</i>
<i class="c k1" style="background:#afd9d9">0.82</i>
<i class="c k2" style="background:#acdfdf">0.81</i>
<i class="c k3" style="background:#a5e9e9">0.79</i>
<i class="c k4" style="background:#9ff4f4">0.77</i>
<i class="c k5" style="background:#9ff4f4">0.77</i>
</div>
<div class="rw" style="top:436px">
<div class="h rh"><b>702</b></div>
<i class="c k0" style="background:#acdfdf">0.81</i>
<i class="c k1" style="background:#a8e4e4">0.80</i>
<i class="c k2" style="background:#a5e9e9">0.79</i>
<i class="c k3" style="background:#9ff4f4">0.77</i>
<i class="c k4" style="background:#99ffff">0.75</i>
<i class="c k5" style="background:#99ffff">0.75</i>
</div>
<div class="sb1"></div><div class="sb2" style="height:40px"></div>
<svg style="left:686.0px;top:511.0px;" width="16" height="16" viewBox="0 0 16 16"><rect x="12" y="0" width="4" height="4" fill="#c4c4c4"/><rect x="6" y="6" width="4" height="4" fill="#c4c4c4"/><rect x="12" y="6" width="4" height="4" fill="#c4c4c4"/><rect x="0" y="12" width="4" height="4" fill="#c4c4c4"/><rect x="6" y="12" width="4" height="4" fill="#c4c4c4"/><rect x="12" y="12" width="4" height="4" fill="#c4c4c4"/></svg>
</div>
<div class="bd"></div>
</div>
<div class="cw" style="left:1474px;top:1px;height:604px">
<svg style="left:18.5px;top:25.0px;" width="32" height="24" viewBox="0 0 32 24"><rect x="2.0" y="0" width="3.0" height="24" fill="#000"/><rect x="7.0" y="0" width="3.0" height="24" fill="#000"/><rect x="12.0" y="0" width="3.0" height="24" fill="#000"/><rect x="17.0" y="0" width="3.0" height="24" fill="#000"/><rect x="22.0" y="0" width="3.0" height="24" fill="#000"/><rect x="27.0" y="0" width="3.0" height="24" fill="#000"/><rect x="0" y="4.8" width="32" height="14.4" fill="#000"/></svg>
<span class="t" style="left:59.5px;top:26px;font-size:24.5px;color:#a7b3c0;letter-spacing:-0.79px;">HS 3-&gt;4</span>
<div class="xb"></div>
<svg style="left:672.5px;top:26.5px;" width="24" height="18" viewBox="0 0 24 18"><path d="M3.5 3 L20.5 15 M20.5 3 L3.5 15" stroke="#5f6878" stroke-width="7.4"/><path d="M3.5 3 L20.5 15 M20.5 3 L3.5 15" stroke="#fafcfe" stroke-width="4.2"/></svg>
<div class="cl" style="height:529px">
<div class="gp" style="top:4px;height:40px"></div><div class="gp" style="top:54px;height:41px"></div>
<svg style="left:25.5px;top:12.0px;" width="28" height="28" viewBox="0 0 28 28"><rect x="0" y="0" width="28" height="28" fill="#000"/><rect x="2" y="2" width="24" height="24" fill="#8a7a2c"/><rect x="5" y="2" width="17" height="12" fill="#fff"/><rect x="6" y="17" width="18" height="9" fill="#000"/><rect x="17" y="19" width="5" height="6" fill="#fff"/><rect x="24" y="3" width="2" height="2" fill="#fff"/></svg>
<svg style="left:73.5px;top:14.0px;" width="22" height="26" viewBox="0 0 22 26"><path d="M2 1 L20 25 M20 1 L2 25" stroke="#f00000" stroke-width="4.2" fill="none"/></svg>
<svg style="left:117.5px;top:14.0px;" width="28" height="26" viewBox="0 0 28 26"><path d="M1 0 V25 H28" stroke="#000" stroke-width="2" stroke-dasharray="2 2" fill="none"/><path d="M1 8 L6 14 L10 13 L13 17 L16 11 L19 14 L22 16 L25 12 L27 7" stroke="#e00000" stroke-width="2" fill="none"/></svg>
<svg style="left:161.5px;top:9.0px;" width="33" height="30" viewBox="0 0 33 30"><path d="M16.5 2 V28 M7 28.6 H27 M5 7.6 H28" stroke="#000" stroke-width="2.7" fill="none"/><path d="M6 7.6 L1 15.5 M6 7.6 L11.5 15.5 M27 7.6 L21.5 15.5 M27 7.6 L32 15.5" stroke="#000" stroke-width="1.4" fill="none"/><path d="M0.6 15.5 H12 L10.5 19.5 Q6.3 22.5 2.1 19.5 Z M21 15.5 H32.4 L30.9 19.5 Q26.7 22.5 22.5 19.5 Z" fill="#e6e02a" stroke="#000" stroke-width="1.3"/><circle cx="16.5" cy="3.2" r="2.4" fill="#000"/></svg>
<svg style="left:209.5px;top:10.0px;" width="28" height="30" viewBox="0 0 28 30"><path d="M2 2 H22 V8 H7 V21 H22 V26 H2 Z" fill="#1a10e0"/><path d="M13.5 1.5 L2.5 28 M13.5 1.5 L25.5 28 M0 28.3 H28" stroke="#000" stroke-width="3.5" fill="none"/></svg>
<svg style="left:243.5px;top:22.0px;" width="14" height="8" viewBox="0 0 14 8"><path d="M0 0 H14 L7 8 Z" fill="#222"/></svg>
<svg style="left:270.5px;top:12.0px;" width="34" height="29" viewBox="0 0 34 29"><path d="M4 1 L20 26 M20 1 L4 26" stroke="#b4b4b4" stroke-width="4" fill="none"/><path d="M18 27 L26 16 L33 27 Z" fill="#b4b4b4"/><path d="M2 27 H33" stroke="#b4b4b4" stroke-width="2.5"/></svg>
<svg style="left:320.0px;top:12.0px;" width="30" height="29" viewBox="0 0 30 29"><path d="M2 2 L9 13 V28 M16 2 L9 13" stroke="#b4b4b4" stroke-width="4" fill="none"/><path d="M22 28 V8" stroke="#b4b4b4" stroke-width="4.5"/><path d="M14 13 L22 0 L30 13 Z" fill="#b4b4b4"/></svg>
<span class="t" style="left:28.2px;top:65px;font-size:21.5px;color:#000;letter-spacing:0.12px;">Function:</span>
<div class="cb"></div>
<span class="t" style="left:133.5px;top:66px;font-size:21.5px;color:#000;letter-spacing:0.92px;">Offset (+/-)</span>
<svg style="left:308.5px;top:69.0px;" width="18" height="12" viewBox="0 0 18 12"><path d="M1.5 2 L9 9.5 L16.5 2" stroke="#444" stroke-width="1.8" fill="none"/></svg>
<span class="t" style="left:351.0px;top:65px;font-size:21.5px;color:#000;letter-spacing:-0.14px;">Value:</span>
<div class="vi"></div>
<span class="t" style="left:425.5px;top:66px;font-size:21.5px;color:#000;letter-spacing:-0.30px;">1.0</span>
<div class="eb"></div>
<span class="t" style="left:520.5px;top:66px;font-size:21.5px;color:#000;letter-spacing:0.04px;">Execute</span>
<div class="tf"></div><div class="dg"></div><div class="dk1"></div><div class="dk2"></div><div class="tc"></div>
<span class="t" style="left:307.0px;top:112px;font-size:22px;color:#0a0a0a;letter-spacing:1.24px;font-weight:bold;">HS 3-&gt;4</span>
<div class="h rh" style="top:136px"></div>
<div class="h k0 sel" style="top:136px"><b style="top:4px">992</b></div>
<div class="h k1" style="top:136px"><b style="top:4px">1728</b></div>
<div class="h k2" style="top:136px"><b style="top:4px">2496</b></div>
<div class="h k3" style="top:136px"><b style="top:4px">3200</b></div>
<div class="h k4" style="top:136px"><b style="top:4px">4000</b></div>
<div class="h k5" style="top:136px"><b style="top:4px">4992</b></div>
<div class="rw" style="top:166px">
<div class="h rh sel"><b>-72</b></div>
<i class="c k0 sc">1.00</i>
<i class="c k1" style="background:#f85858">1.07</i>
<i class="c k2" style="background:#f85858">1.07</i>
<i class="c k3" style="background:#fc5252">1.08</i>
<i class="c k4" style="background:#fc5252">1.08</i>
<i class="c k5" style="background:#fc5252">1.08</i>
</div>
<div class="rw" style="top:196px">
<div class="h rh"><b>-18</b></div>
<i class="c k0" style="background:#e08383">1.00</i>
<i class="c k1" style="background:#e08383">1.00</i>
<i class="c k2" style="background:#e08383">1.00</i>
<i class="c k3" style="background:#e08383">1.00</i>
<i class="c k4" style="background:#e08383">1.00</i>
<i class="c k5" style="background:#e08383">1.00</i>
</div>
<div class="rw" style="top:226px">
<div class="h rh"><b></b></div>
<i class="c k0" style="background:#e08383">1.00</i>
<i class="c k1" style="background:#e08383">1.00</i>
<i class="c k2" style="background:#dc8a8a">0.99</i>
<i class="c k3" style="background:#d99090">0.98</i>
<i class="c k4" style="background:#d99090">0.98</i>
<i class="c k5" style="background:#d99090">0.98</i>
</div>
<div class="rw" style="top:256px">
<div class="h rh"><b>48</b></div>
<i class="c k0" style="background:#c7afaf">0.93</i>
<i class="c k1" style="background:#c3b5b5">0.92</i>
<i class="c k2" style="background:#c3b5b5">0.92</i>
<i class="c k3" style="background:#c0bbbb">0.91</i>
<i class="c k4" style="background:#bcc1c1">0.90</i>
<i class="c k5" style="background:#b9c7c7">0.89</i>
</div>
<div class="rw" style="top:286px">
<div class="h rh"><b>102</b></div>
<i class="c k0" style="background:#c3b5b5">0.92</i>
<i class="c k1" style="background:#c0bbbb">0.91</i>
<i class="c k2" style="background:#c0bbbb">0.91</i>
<i class="c k3" style="background:#b9c7c7">0.89</i>
<i class="c k4" style="background:#b9c7c7">0.89</i>
<i class="c k5" style="background:#b9c7c7">0.89</i>
</div>
<div class="rw" style="top:316px">
<div class="h rh"><b>198</b></div>
<i class="c k0" style="background:#c0bbbb">0.91</i>
<i class="c k1" style="background:#bcc1c1">0.90</i>
<i class="c k2" style="background:#b9c7c7">0.89</i>
<i class="c k3" style="background:#b5cece">0.88</i>
<i class="c k4" style="background:#b2d4d4">0.87</i>
<i class="c k5" style="background:#aedada">0.86</i>
</div>
<div class="rw" style="top:346px">
<div class="h rh"><b>300</b></div>
<i class="c k0" style="background:#b5cece">0.88</i>
<i class="c k1" style="background:#b5cece">0.88</i>
<i class="c k2" style="background:#b2d4d4">0.87</i>
<i class="c k3" style="background:#aedada">0.86</i>
<i class="c k4" style="background:#abe0e0">0.85</i>
<i class="c k5" style="background:#a7e6e6">0.84</i>
</div>
<div class="rw" style="top:376px">
<div class="h rh"><b>402</b></div>
<i class="c k0" style="background:#b2d4d4">0.87</i>
<i class="c k1" style="background:#aedada">0.86</i>
<i class="c k2" style="background:#abe0e0">0.85</i>
<i class="c k3" style="background:#a7e6e6">0.84</i>
<i class="c k4" style="background:#a4ecec">0.83</i>
<i class="c k5" style="background:#9df9f9">0.81</i>
</div>
<div class="rw" style="top:406px">
<div class="h rh"><b>498</b></div>
<i class="c k0" style="background:#abe0e0">0.85</i>
<i class="c k1" style="background:#a7e6e6">0.84</i>
<i class="c k2" style="background:#a7e6e6">0.84</i>
<i class="c k3" style="background:#a4ecec">0.83</i>
<i class="c k4" style="background:#9df9f9">0.81</i>
<i class="c k5" style="background:#99ffff">0.80</i>
</div>
<div class="rw" style="top:436px">
<div class="h rh"><b>702</b></div>
<i class="c k0" style="background:#abe0e0">0.85</i>
<i class="c k1" style="background:#a7e6e6">0.84</i>
<i class="c k2" style="background:#a7e6e6">0.84</i>
<i class="c k3" style="background:#a4ecec">0.83</i>
<i class="c k4" style="background:#9df9f9">0.81</i>
<i class="c k5" style="background:#99ffff">0.80</i>
</div>
<div class="sb1"></div><div class="sb2" style="height:39px"></div>
<svg style="left:686.0px;top:510.0px;" width="16" height="16" viewBox="0 0 16 16"><rect x="12" y="0" width="4" height="4" fill="#c4c4c4"/><rect x="6" y="6" width="4" height="4" fill="#c4c4c4"/><rect x="12" y="6" width="4" height="4" fill="#c4c4c4"/><rect x="0" y="12" width="4" height="4" fill="#c4c4c4"/><rect x="6" y="12" width="4" height="4" fill="#c4c4c4"/><rect x="12" y="12" width="4" height="4" fill="#c4c4c4"/></svg>
</div>
<div class="bd"></div>
</div>
<div class="cw" style="left:2210px;top:0px;height:603px">
<svg style="left:18.5px;top:25.0px;" width="32" height="24" viewBox="0 0 32 24"><rect x="2.0" y="0" width="3.0" height="24" fill="#000"/><rect x="7.0" y="0" width="3.0" height="24" fill="#000"/><rect x="12.0" y="0" width="3.0" height="24" fill="#000"/><rect x="17.0" y="0" width="3.0" height="24" fill="#000"/><rect x="22.0" y="0" width="3.0" height="24" fill="#000"/><rect x="27.0" y="0" width="3.0" height="24" fill="#000"/><rect x="0" y="4.8" width="32" height="14.4" fill="#000"/></svg>
<span class="t" style="left:59.5px;top:26px;font-size:24.5px;color:#a7b3c0;letter-spacing:-0.79px;">HS 4-&gt;5</span>
<div class="xb"></div>
<svg style="left:672.5px;top:26.5px;" width="24" height="18" viewBox="0 0 24 18"><path d="M3.5 3 L20.5 15 M20.5 3 L3.5 15" stroke="#5f6878" stroke-width="7.4"/><path d="M3.5 3 L20.5 15 M20.5 3 L3.5 15" stroke="#fafcfe" stroke-width="4.2"/></svg>
<div class="cl" style="height:528px">
<div class="gp" style="top:4px;height:40px"></div><div class="gp" style="top:54px;height:41px"></div>
<svg style="left:25.5px;top:12.0px;" width="28" height="28" viewBox="0 0 28 28"><rect x="0" y="0" width="28" height="28" fill="#000"/><rect x="2" y="2" width="24" height="24" fill="#8a7a2c"/><rect x="5" y="2" width="17" height="12" fill="#fff"/><rect x="6" y="17" width="18" height="9" fill="#000"/><rect x="17" y="19" width="5" height="6" fill="#fff"/><rect x="24" y="3" width="2" height="2" fill="#fff"/></svg>
<svg style="left:73.5px;top:14.0px;" width="22" height="26" viewBox="0 0 22 26"><path d="M2 1 L20 25 M20 1 L2 25" stroke="#f00000" stroke-width="4.2" fill="none"/></svg>
<svg style="left:117.5px;top:14.0px;" width="28" height="26" viewBox="0 0 28 26"><path d="M1 0 V25 H28" stroke="#000" stroke-width="2" stroke-dasharray="2 2" fill="none"/><path d="M1 8 L6 14 L10 13 L13 17 L16 11 L19 14 L22 16 L25 12 L27 7" stroke="#e00000" stroke-width="2" fill="none"/></svg>
<svg style="left:161.5px;top:9.0px;" width="33" height="30" viewBox="0 0 33 30"><path d="M16.5 2 V28 M7 28.6 H27 M5 7.6 H28" stroke="#000" stroke-width="2.7" fill="none"/><path d="M6 7.6 L1 15.5 M6 7.6 L11.5 15.5 M27 7.6 L21.5 15.5 M27 7.6 L32 15.5" stroke="#000" stroke-width="1.4" fill="none"/><path d="M0.6 15.5 H12 L10.5 19.5 Q6.3 22.5 2.1 19.5 Z M21 15.5 H32.4 L30.9 19.5 Q26.7 22.5 22.5 19.5 Z" fill="#e6e02a" stroke="#000" stroke-width="1.3"/><circle cx="16.5" cy="3.2" r="2.4" fill="#000"/></svg>
<svg style="left:209.5px;top:10.0px;" width="28" height="30" viewBox="0 0 28 30"><path d="M2 2 H22 V8 H7 V21 H22 V26 H2 Z" fill="#1a10e0"/><path d="M13.5 1.5 L2.5 28 M13.5 1.5 L25.5 28 M0 28.3 H28" stroke="#000" stroke-width="3.5" fill="none"/></svg>
<svg style="left:243.5px;top:22.0px;" width="14" height="8" viewBox="0 0 14 8"><path d="M0 0 H14 L7 8 Z" fill="#222"/></svg>
<svg style="left:270.5px;top:12.0px;" width="34" height="29" viewBox="0 0 34 29"><path d="M4 1 L20 26 M20 1 L4 26" stroke="#b4b4b4" stroke-width="4" fill="none"/><path d="M18 27 L26 16 L33 27 Z" fill="#b4b4b4"/><path d="M2 27 H33" stroke="#b4b4b4" stroke-width="2.5"/></svg>
<svg style="left:320.0px;top:12.0px;" width="30" height="29" viewBox="0 0 30 29"><path d="M2 2 L9 13 V28 M16 2 L9 13" stroke="#b4b4b4" stroke-width="4" fill="none"/><path d="M22 28 V8" stroke="#b4b4b4" stroke-width="4.5"/><path d="M14 13 L22 0 L30 13 Z" fill="#b4b4b4"/></svg>
<span class="t" style="left:28.2px;top:65px;font-size:21.5px;color:#000;letter-spacing:0.12px;">Function:</span>
<div class="cb"></div>
<span class="t" style="left:133.5px;top:66px;font-size:21.5px;color:#000;letter-spacing:0.92px;">Offset (+/-)</span>
<svg style="left:308.5px;top:69.0px;" width="18" height="12" viewBox="0 0 18 12"><path d="M1.5 2 L9 9.5 L16.5 2" stroke="#444" stroke-width="1.8" fill="none"/></svg>
<span class="t" style="left:351.0px;top:65px;font-size:21.5px;color:#000;letter-spacing:-0.14px;">Value:</span>
<div class="vi"></div>
<span class="t" style="left:425.5px;top:66px;font-size:21.5px;color:#000;letter-spacing:-0.30px;">1.0</span>
<div class="eb"></div>
<span class="t" style="left:520.5px;top:66px;font-size:21.5px;color:#000;letter-spacing:0.04px;">Execute</span>
<div class="tf"></div><div class="dg"></div><div class="dk1"></div><div class="dk2"></div><div class="tc"></div>
<span class="t" style="left:307.0px;top:112px;font-size:22px;color:#0a0a0a;letter-spacing:1.24px;font-weight:bold;">HS 4-&gt;5</span>
<div class="h rh" style="top:136px"></div>
<div class="h k0 sel" style="top:136px"><b style="top:4px">992</b></div>
<div class="h k1" style="top:136px"><b style="top:4px">1728</b></div>
<div class="h k2" style="top:136px"><b style="top:4px">2496</b></div>
<div class="h k3" style="top:136px"><b style="top:4px">3200</b></div>
<div class="h k4" style="top:136px"><b style="top:4px">4000</b></div>
<div class="h k5" style="top:136px"><b style="top:4px">4992</b></div>
<div class="rw" style="top:166px">
<div class="h rh sel"><b>-72</b></div>
<i class="c k0 sc">1.00</i>
<i class="c k1" style="background:#f85959">1.06</i>
<i class="c k2" style="background:#fc5252">1.07</i>
<i class="c k3" style="background:#fc5252">1.07</i>
<i class="c k4" style="background:#fc5252">1.07</i>
<i class="c k5" style="background:#fc5252">1.07</i>
</div>
<div class="rw" style="top:196px">
<div class="h rh"><b>-18</b></div>
<i class="c k0" style="background:#e08282">1.00</i>
<i class="c k1" style="background:#e08282">1.00</i>
<i class="c k2" style="background:#e08282">1.00</i>
<i class="c k3" style="background:#e08282">1.00</i>
<i class="c k4" style="background:#e08282">1.00</i>
<i class="c k5" style="background:#e08282">1.00</i>
</div>
<div class="rw" style="top:226px">
<div class="h rh"><b></b></div>
<i class="c k0" style="background:#e08282">1.00</i>
<i class="c k1" style="background:#e08282">1.00</i>
<i class="c k2" style="background:#e08282">1.00</i>
<i class="c k3" style="background:#dc8989">0.99</i>
<i class="c k4" style="background:#dc8989">0.99</i>
<i class="c k5" style="background:#dc8989">0.99</i>
</div>
<div class="rw" style="top:256px">
<div class="h rh"><b>48</b></div>
<i class="c k0" style="background:#c5b3b3">0.93</i>
<i class="c k1" style="background:#c5b3b3">0.93</i>
<i class="c k2" style="background:#c1baba">0.92</i>
<i class="c k3" style="background:#c1baba">0.92</i>
<i class="c k4" style="background:#bdc1c1">0.91</i>
<i class="c k5" style="background:#bdc1c1">0.91</i>
</div>
<div class="rw" style="top:286px">
<div class="h rh"><b>102</b></div>
<i class="c k0" style="background:#c1baba">0.92</i>
<i class="c k1" style="background:#bdc1c1">0.91</i>
<i class="c k2" style="background:#bdc1c1">0.91</i>
<i class="c k3" style="background:#bdc1c1">0.91</i>
<i class="c k4" style="background:#b9c8c8">0.90</i>
<i class="c k5" style="background:#b9c8c8">0.90</i>
</div>
<div class="rw" style="top:316px">
<div class="h rh"><b>198</b></div>
<i class="c k0" style="background:#bdc1c1">0.91</i>
<i class="c k1" style="background:#bdc1c1">0.91</i>
<i class="c k2" style="background:#b9c8c8">0.90</i>
<i class="c k3" style="background:#b5cfcf">0.89</i>
<i class="c k4" style="background:#b1d5d5">0.88</i>
<i class="c k5" style="background:#b1d5d5">0.88</i>
</div>
<div class="rw" style="top:346px">
<div class="h rh"><b>300</b></div>
<i class="c k0" style="background:#b9c8c8">0.90</i>
<i class="c k1" style="background:#b5cfcf">0.89</i>
<i class="c k2" style="background:#b5cfcf">0.89</i>
<i class="c k3" style="background:#b1d5d5">0.88</i>
<i class="c k4" style="background:#addcdc">0.87</i>
<i class="c k5" style="background:#a9e3e3">0.86</i>
</div>
<div class="rw" style="top:376px">
<div class="h rh"><b>402</b></div>
<i class="c k0" style="background:#b5cfcf">0.89</i>
<i class="c k1" style="background:#b1d5d5">0.88</i>
<i class="c k2" style="background:#b1d5d5">0.88</i>
<i class="c k3" style="background:#addcdc">0.87</i>
<i class="c k4" style="background:#a9e3e3">0.86</i>
<i class="c k5" style="background:#a5eaea">0.85</i>
</div>
<div class="rw" style="top:406px">
<div class="h rh"><b>498</b></div>
<i class="c k0" style="background:#b1d5d5">0.88</i>
<i class="c k1" style="background:#addcdc">0.87</i>
<i class="c k2" style="background:#a9e3e3">0.86</i>
<i class="c k3" style="background:#a5eaea">0.85</i>
<i class="c k4" style="background:#a1f1f1">0.84</i>
<i class="c k5" style="background:#99ffff">0.82</i>
</div>
<div class="rw" style="top:436px">
<div class="h rh"><b>702</b></div>
<i class="c k0" style="background:#b1d5d5">0.88</i>
<i class="c k1" style="background:#addcdc">0.87</i>
<i class="c k2" style="background:#a9e3e3">0.86</i>
<i class="c k3" style="background:#a5eaea">0.85</i>
<i class="c k4" style="background:#a1f1f1">0.84</i>
<i class="c k5" style="background:#99ffff">0.82</i>
</div>
<div class="sb1"></div><div class="sb2" style="height:38px"></div>
<svg style="left:686.0px;top:509.0px;" width="16" height="16" viewBox="0 0 16 16"><rect x="12" y="0" width="4" height="4" fill="#c4c4c4"/><rect x="6" y="6" width="4" height="4" fill="#c4c4c4"/><rect x="12" y="6" width="4" height="4" fill="#c4c4c4"/><rect x="0" y="12" width="4" height="4" fill="#c4c4c4"/><rect x="6" y="12" width="4" height="4" fill="#c4c4c4"/><rect x="12" y="12" width="4" height="4" fill="#c4c4c4"/></svg>
</div>
<div class="bd"></div>
</div>
<div class="cw" style="left:4px;top:602px;height:603px">
<svg style="left:18.5px;top:25.0px;" width="32" height="24" viewBox="0 0 32 24"><rect x="2.0" y="0" width="3.0" height="24" fill="#000"/><rect x="7.0" y="0" width="3.0" height="24" fill="#000"/><rect x="12.0" y="0" width="3.0" height="24" fill="#000"/><rect x="17.0" y="0" width="3.0" height="24" fill="#000"/><rect x="22.0" y="0" width="3.0" height="24" fill="#000"/><rect x="27.0" y="0" width="3.0" height="24" fill="#000"/><rect x="0" y="4.8" width="32" height="14.4" fill="#000"/></svg>
<span class="t" style="left:59.5px;top:26px;font-size:24.5px;color:#a7b3c0;letter-spacing:-0.79px;">HS 5-&gt;6</span>
<div class="xb"></div>
<svg style="left:672.5px;top:26.5px;" width="24" height="18" viewBox="0 0 24 18"><path d="M3.5 3 L20.5 15 M20.5 3 L3.5 15" stroke="#5f6878" stroke-width="7.4"/><path d="M3.5 3 L20.5 15 M20.5 3 L3.5 15" stroke="#fafcfe" stroke-width="4.2"/></svg>
<div class="cl" style="height:528px">
<div class="gp" style="top:4px;height:40px"></div><div class="gp" style="top:54px;height:41px"></div>
<svg style="left:25.5px;top:12.0px;" width="28" height="28" viewBox="0 0 28 28"><rect x="0" y="0" width="28" height="28" fill="#000"/><rect x="2" y="2" width="24" height="24" fill="#8a7a2c"/><rect x="5" y="2" width="17" height="12" fill="#fff"/><rect x="6" y="17" width="18" height="9" fill="#000"/><rect x="17" y="19" width="5" height="6" fill="#fff"/><rect x="24" y="3" width="2" height="2" fill="#fff"/></svg>
<svg style="left:73.5px;top:14.0px;" width="22" height="26" viewBox="0 0 22 26"><path d="M2 1 L20 25 M20 1 L2 25" stroke="#f00000" stroke-width="4.2" fill="none"/></svg>
<svg style="left:117.5px;top:14.0px;" width="28" height="26" viewBox="0 0 28 26"><path d="M1 0 V25 H28" stroke="#000" stroke-width="2" stroke-dasharray="2 2" fill="none"/><path d="M1 8 L6 14 L10 13 L13 17 L16 11 L19 14 L22 16 L25 12 L27 7" stroke="#e00000" stroke-width="2" fill="none"/></svg>
<svg style="left:161.5px;top:9.0px;" width="33" height="30" viewBox="0 0 33 30"><path d="M16.5 2 V28 M7 28.6 H27 M5 7.6 H28" stroke="#000" stroke-width="2.7" fill="none"/><path d="M6 7.6 L1 15.5 M6 7.6 L11.5 15.5 M27 7.6 L21.5 15.5 M27 7.6 L32 15.5" stroke="#000" stroke-width="1.4" fill="none"/><path d="M0.6 15.5 H12 L10.5 19.5 Q6.3 22.5 2.1 19.5 Z M21 15.5 H32.4 L30.9 19.5 Q26.7 22.5 22.5 19.5 Z" fill="#e6e02a" stroke="#000" stroke-width="1.3"/><circle cx="16.5" cy="3.2" r="2.4" fill="#000"/></svg>
<svg style="left:209.5px;top:10.0px;" width="28" height="30" viewBox="0 0 28 30"><path d="M2 2 H22 V8 H7 V21 H22 V26 H2 Z" fill="#1a10e0"/><path d="M13.5 1.5 L2.5 28 M13.5 1.5 L25.5 28 M0 28.3 H28" stroke="#000" stroke-width="3.5" fill="none"/></svg>
<svg style="left:243.5px;top:22.0px;" width="14" height="8" viewBox="0 0 14 8"><path d="M0 0 H14 L7 8 Z" fill="#222"/></svg>
<svg style="left:270.5px;top:12.0px;" width="34" height="29" viewBox="0 0 34 29"><path d="M4 1 L20 26 M20 1 L4 26" stroke="#b4b4b4" stroke-width="4" fill="none"/><path d="M18 27 L26 16 L33 27 Z" fill="#b4b4b4"/><path d="M2 27 H33" stroke="#b4b4b4" stroke-width="2.5"/></svg>
<svg style="left:320.0px;top:12.0px;" width="30" height="29" viewBox="0 0 30 29"><path d="M2 2 L9 13 V28 M16 2 L9 13" stroke="#b4b4b4" stroke-width="4" fill="none"/><path d="M22 28 V8" stroke="#b4b4b4" stroke-width="4.5"/><path d="M14 13 L22 0 L30 13 Z" fill="#b4b4b4"/></svg>
<span class="t" style="left:28.2px;top:65px;font-size:21.5px;color:#000;letter-spacing:0.12px;">Function:</span>
<div class="cb"></div>
<span class="t" style="left:133.5px;top:66px;font-size:21.5px;color:#000;letter-spacing:0.92px;">Offset (+/-)</span>
<svg style="left:308.5px;top:69.0px;" width="18" height="12" viewBox="0 0 18 12"><path d="M1.5 2 L9 9.5 L16.5 2" stroke="#444" stroke-width="1.8" fill="none"/></svg>
<span class="t" style="left:351.0px;top:65px;font-size:21.5px;color:#000;letter-spacing:-0.14px;">Value:</span>
<div class="vi"></div>
<span class="t" style="left:425.5px;top:66px;font-size:21.5px;color:#000;letter-spacing:-0.30px;">1.0</span>
<div class="eb"></div>
<span class="t" style="left:520.5px;top:66px;font-size:21.5px;color:#000;letter-spacing:0.04px;">Execute</span>
<div class="tf"></div><div class="dg"></div><div class="dk1"></div><div class="dk2"></div><div class="tc"></div>
<span class="t" style="left:307.0px;top:112px;font-size:22px;color:#0a0a0a;letter-spacing:1.24px;font-weight:bold;">HS 5-&gt;6</span>
<div class="h rh" style="top:136px"></div>
<div class="h k0 sel" style="top:136px"><b style="top:4px">992</b></div>
<div class="h k1" style="top:136px"><b style="top:4px">1728</b></div>
<div class="h k2" style="top:136px"><b style="top:4px">2496</b></div>
<div class="h k3" style="top:136px"><b style="top:4px">3200</b></div>
<div class="h k4" style="top:136px"><b style="top:4px">4000</b></div>
<div class="h k5" style="top:136px"><b style="top:4px">4992</b></div>
<div class="rw" style="top:166px">
<div class="h rh sel"><b>-72</b></div>
<i class="c k0 sc">1.00</i>
<i class="c k1" style="background:#f85959">1.06</i>
<i class="c k2" style="background:#fc5252">1.07</i>
<i class="c k3" style="background:#fc5252">1.07</i>
<i class="c k4" style="background:#fc5252">1.07</i>
<i class="c k5" style="background:#fc5252">1.07</i>
</div>
<div class="rw" style="top:196px">
<div class="h rh"><b>-18</b></div>
<i class="c k0" style="background:#df8484">1.00</i>
<i class="c k1" style="background:#df8484">1.00</i>
<i class="c k2" style="background:#df8484">1.00</i>
<i class="c k3" style="background:#df8484">1.00</i>
<i class="c k4" style="background:#df8484">1.00</i>
<i class="c k5" style="background:#df8484">1.00</i>
</div>
<div class="rw" style="top:226px">
<div class="h rh"><b></b></div>
<i class="c k0" style="background:#df8484">1.00</i>
<i class="c k1" style="background:#df8484">1.00</i>
<i class="c k2" style="background:#df8484">1.00</i>
<i class="c k3" style="background:#df8484">1.00</i>
<i class="c k4" style="background:#df8484">1.00</i>
<i class="c k5" style="background:#db8c8c">0.99</i>
</div>
<div class="rw" style="top:256px">
<div class="h rh"><b>48</b></div>
<i class="c k0" style="background:#c6b0b0">0.94</i>
<i class="c k1" style="background:#c6b0b0">0.94</i>
<i class="c k2" style="background:#c2b7b7">0.93</i>
<i class="c k3" style="background:#c2b7b7">0.93</i>
<i class="c k4" style="background:#c2b7b7">0.93</i>
<i class="c k5" style="background:#c2b7b7">0.93</i>
</div>
<div class="rw" style="top:286px">
<div class="h rh"><b>102</b></div>
<i class="c k0" style="background:#c6b0b0">0.94</i>
<i class="c k1" style="background:#c2b7b7">0.93</i>
<i class="c k2" style="background:#bebebe">0.92</i>
<i class="c k3" style="background:#bebebe">0.92</i>
<i class="c k4" style="background:#bebebe">0.92</i>
<i class="c k5" style="background:#bac5c5">0.91</i>
</div>
<div class="rw" style="top:316px">
<div class="h rh"><b>198</b></div>
<i class="c k0" style="background:#c2b7b7">0.93</i>
<i class="c k1" style="background:#bebebe">0.92</i>
<i class="c k2" style="background:#bac5c5">0.91</i>
<i class="c k3" style="background:#bac5c5">0.91</i>
<i class="c k4" style="background:#b6cdcd">0.90</i>
<i class="c k5" style="background:#b2d4d4">0.89</i>
</div>
<div class="rw" style="top:346px">
<div class="h rh"><b>300</b></div>
<i class="c k0" style="background:#bebebe">0.92</i>
<i class="c k1" style="background:#bac5c5">0.91</i>
<i class="c k2" style="background:#bac5c5">0.91</i>
<i class="c k3" style="background:#b2d4d4">0.89</i>
<i class="c k4" style="background:#b2d4d4">0.89</i>
<i class="c k5" style="background:#aedbdb">0.88</i>
</div>
<div class="rw" style="top:376px">
<div class="h rh"><b>402</b></div>
<i class="c k0" style="background:#bac5c5">0.91</i>
<i class="c k1" style="background:#b6cdcd">0.90</i>
<i class="c k2" style="background:#b2d4d4">0.89</i>
<i class="c k3" style="background:#aedbdb">0.88</i>
<i class="c k4" style="background:#aae2e2">0.87</i>
<i class="c k5" style="background:#a1f1f1">0.85</i>
</div>
<div class="rw" style="top:406px">
<div class="h rh"><b>498</b></div>
<i class="c k0" style="background:#b2d4d4">0.89</i>
<i class="c k1" style="background:#b2d4d4">0.89</i>
<i class="c k2" style="background:#aedbdb">0.88</i>
<i class="c k3" style="background:#aae2e2">0.87</i>
<i class="c k4" style="background:#a1f1f1">0.85</i>
<i class="c k5" style="background:#99ffff">0.83</i>
</div>
<div class="rw" style="top:436px">
<div class="h rh"><b>702</b></div>
<i class="c k0" style="background:#b2d4d4">0.89</i>
<i class="c k1" style="background:#b2d4d4">0.89</i>
<i class="c k2" style="background:#aedbdb">0.88</i>
<i class="c k3" style="background:#aae2e2">0.87</i>
<i class="c k4" style="background:#a1f1f1">0.85</i>
<i class="c k5" style="background:#99ffff">0.83</i>
</div>
<div class="sb1"></div><div class="sb2" style="height:38px"></div>
<svg style="left:686.0px;top:509.0px;" width="16" height="16" viewBox="0 0 16 16"><rect x="12" y="0" width="4" height="4" fill="#c4c4c4"/><rect x="6" y="6" width="4" height="4" fill="#c4c4c4"/><rect x="12" y="6" width="4" height="4" fill="#c4c4c4"/><rect x="0" y="12" width="4" height="4" fill="#c4c4c4"/><rect x="6" y="12" width="4" height="4" fill="#c4c4c4"/><rect x="12" y="12" width="4" height="4" fill="#c4c4c4"/></svg>
</div>
<div class="bd"></div>
</div>
<div class="cw" style="left:738px;top:608px;height:603px">
<svg style="left:18.5px;top:25.0px;" width="32" height="24" viewBox="0 0 32 24"><rect x="2.0" y="0" width="3.0" height="24" fill="#000"/><rect x="7.0" y="0" width="3.0" height="24" fill="#000"/><rect x="12.0" y="0" width="3.0" height="24" fill="#000"/><rect x="17.0" y="0" width="3.0" height="24" fill="#000"/><rect x="22.0" y="0" width="3.0" height="24" fill="#000"/><rect x="27.0" y="0" width="3.0" height="24" fill="#000"/><rect x="0" y="4.8" width="32" height="14.4" fill="#000"/></svg>
<span class="t" style="left:59.5px;top:26px;font-size:24.5px;color:#a7b3c0;letter-spacing:-0.79px;">HS 1-&gt;2</span>
<div class="xb"></div>
<svg style="left:672.5px;top:26.5px;" width="24" height="18" viewBox="0 0 24 18"><path d="M3.5 3 L20.5 15 M20.5 3 L3.5 15" stroke="#5f6878" stroke-width="7.4"/><path d="M3.5 3 L20.5 15 M20.5 3 L3.5 15" stroke="#fafcfe" stroke-width="4.2"/></svg>
<div class="cl" style="height:528px">
<div class="gp" style="top:4px;height:40px"></div><div class="gp" style="top:54px;height:41px"></div>
<svg style="left:25.5px;top:12.0px;" width="28" height="28" viewBox="0 0 28 28"><rect x="0" y="0" width="28" height="28" fill="#000"/><rect x="2" y="2" width="24" height="24" fill="#8a7a2c"/><rect x="5" y="2" width="17" height="12" fill="#fff"/><rect x="6" y="17" width="18" height="9" fill="#000"/><rect x="17" y="19" width="5" height="6" fill="#fff"/><rect x="24" y="3" width="2" height="2" fill="#fff"/></svg>
<svg style="left:73.5px;top:14.0px;" width="22" height="26" viewBox="0 0 22 26"><path d="M2 1 L20 25 M20 1 L2 25" stroke="#f00000" stroke-width="4.2" fill="none"/></svg>
<svg style="left:117.5px;top:14.0px;" width="28" height="26" viewBox="0 0 28 26"><path d="M1 0 V25 H28" stroke="#000" stroke-width="2" stroke-dasharray="2 2" fill="none"/><path d="M1 8 L6 14 L10 13 L13 17 L16 11 L19 14 L22 16 L25 12 L27 7" stroke="#e00000" stroke-width="2" fill="none"/></svg>
<svg style="left:161.5px;top:9.0px;" width="33" height="30" viewBox="0 0 33 30"><path d="M16.5 2 V28 M7 28.6 H27 M5 7.6 H28" stroke="#000" stroke-width="2.7" fill="none"/><path d="M6 7.6 L1 15.5 M6 7.6 L11.5 15.5 M27 7.6 L21.5 15.5 M27 7.6 L32 15.5" stroke="#000" stroke-width="1.4" fill="none"/><path d="M0.6 15.5 H12 L10.5 19.5 Q6.3 22.5 2.1 19.5 Z M21 15.5 H32.4 L30.9 19.5 Q26.7 22.5 22.5 19.5 Z" fill="#e6e02a" stroke="#000" stroke-width="1.3"/><circle cx="16.5" cy="3.2" r="2.4" fill="#000"/></svg>
<svg style="left:209.5px;top:10.0px;" width="28" height="30" viewBox="0 0 28 30"><path d="M2 2 H22 V8 H7 V21 H22 V26 H2 Z" fill="#1a10e0"/><path d="M13.5 1.5 L2.5 28 M13.5 1.5 L25.5 28 M0 28.3 H28" stroke="#000" stroke-width="3.5" fill="none"/></svg>
<svg style="left:243.5px;top:22.0px;" width="14" height="8" viewBox="0 0 14 8"><path d="M0 0 H14 L7 8 Z" fill="#222"/></svg>
<svg style="left:270.5px;top:12.0px;" width="34" height="29" viewBox="0 0 34 29"><path d="M4 1 L20 26 M20 1 L4 26" stroke="#b4b4b4" stroke-width="4" fill="none"/><path d="M18 27 L26 16 L33 27 Z" fill="#b4b4b4"/><path d="M2 27 H33" stroke="#b4b4b4" stroke-width="2.5"/></svg>
<svg style="left:320.0px;top:12.0px;" width="30" height="29" viewBox="0 0 30 29"><path d="M2 2 L9 13 V28 M16 2 L9 13" stroke="#b4b4b4" stroke-width="4" fill="none"/><path d="M22 28 V8" stroke="#b4b4b4" stroke-width="4.5"/><path d="M14 13 L22 0 L30 13 Z" fill="#b4b4b4"/></svg>
<span class="t" style="left:28.2px;top:65px;font-size:21.5px;color:#000;letter-spacing:0.12px;">Function:</span>
<div class="cb"></div>
<span class="t" style="left:133.5px;top:66px;font-size:21.5px;color:#000;letter-spacing:0.92px;">Offset (+/-)</span>
<svg style="left:308.5px;top:69.0px;" width="18" height="12" viewBox="0 0 18 12"><path d="M1.5 2 L9 9.5 L16.5 2" stroke="#444" stroke-width="1.8" fill="none"/></svg>
<span class="t" style="left:351.0px;top:65px;font-size:21.5px;color:#000;letter-spacing:-0.14px;">Value:</span>
<div class="vi"></div>
<span class="t" style="left:425.5px;top:66px;font-size:21.5px;color:#000;letter-spacing:-0.30px;">1.0</span>
<div class="eb"></div>
<span class="t" style="left:520.5px;top:66px;font-size:21.5px;color:#000;letter-spacing:0.04px;">Execute</span>
<div class="tf"></div><div class="dg"></div><div class="dk1"></div><div class="dk2"></div><div class="tc"></div>
<span class="t" style="left:307.0px;top:112px;font-size:22px;color:#0a0a0a;letter-spacing:1.24px;font-weight:bold;">HS 1-&gt;2</span>
<div class="h rh" style="top:136px"></div>
<div class="h k0 sel" style="top:136px"><b style="top:4px">992</b></div>
<div class="h k1" style="top:136px"><b style="top:4px">1728</b></div>
<div class="h k2" style="top:136px"><b style="top:4px">2496</b></div>
<div class="h k3" style="top:136px"><b style="top:4px">3200</b></div>
<div class="h k4" style="top:136px"><b style="top:4px">4000</b></div>
<div class="h k5" style="top:136px"><b style="top:4px">4992</b></div>
<div class="rw" style="top:166px">
<div class="h rh sel"><b>-72</b></div>
<i class="c k0 sc">1.00</i>
<i class="c k1" style="background:#fc5252">1.06</i>
<i class="c k2" style="background:#fc5252">1.06</i>
<i class="c k3" style="background:#fc5252">1.06</i>
<i class="c k4" style="background:#fc5252">1.06</i>
<i class="c k5" style="background:#fc5252">1.06</i>
</div>
<div class="rw" style="top:196px">
<div class="h rh"><b>-18</b></div>
<i class="c k0" style="background:#ee6a6a">1.00</i>
<i class="c k1" style="background:#ee6a6a">1.00</i>
<i class="c k2" style="background:#ee6a6a">1.00</i>
<i class="c k3" style="background:#ee6a6a">1.00</i>
<i class="c k4" style="background:#ee6a6a">1.00</i>
<i class="c k5" style="background:#ee6a6a">1.00</i>
</div>
<div class="rw" style="top:226px">
<div class="h rh"><b></b></div>
<i class="c k0" style="background:#ec6e6e">0.99</i>
<i class="c k1" style="background:#ea7272">0.98</i>
<i class="c k2" style="background:#e77676">0.97</i>
<i class="c k3" style="background:#e77676">0.97</i>
<i class="c k4" style="background:#e77676">0.97</i>
<i class="c k5" style="background:#e77676">0.97</i>
</div>
<div class="rw" style="top:256px">
<div class="h rh"><b>48</b></div>
<i class="c k0" style="background:#ea7272">0.98</i>
<i class="c k1" style="background:#e08282">0.94</i>
<i class="c k2" style="background:#d98e8e">0.91</i>
<i class="c k3" style="background:#d79292">0.90</i>
<i class="c k4" style="background:#d79292">0.90</i>
<i class="c k5" style="background:#d79292">0.90</i>
</div>
<div class="rw" style="top:286px">
<div class="h rh"><b>102</b></div>
<i class="c k0" style="background:#e37e7e">0.95</i>
<i class="c k1" style="background:#d98e8e">0.91</i>
<i class="c k2" style="background:#d39a9a">0.88</i>
<i class="c k3" style="background:#cca6a6">0.85</i>
<i class="c k4" style="background:#c9abab">0.84</i>
<i class="c k5" style="background:#c9abab">0.84</i>
</div>
<div class="rw" style="top:316px">
<div class="h rh"><b>198</b></div>
<i class="c k0" style="background:#e08282">0.94</i>
<i class="c k1" style="background:#d39a9a">0.88</i>
<i class="c k2" style="background:#c9abab">0.84</i>
<i class="c k3" style="background:#c2b7b7">0.81</i>
<i class="c k4" style="background:#c0bbbb">0.80</i>
<i class="c k5" style="background:#bebfbf">0.79</i>
</div>
<div class="rw" style="top:346px">
<div class="h rh"><b>300</b></div>
<i class="c k0" style="background:#d79292">0.90</i>
<i class="c k1" style="background:#c9abab">0.84</i>
<i class="c k2" style="background:#b9c7c7">0.77</i>
<i class="c k3" style="background:#b0d7d7">0.73</i>
<i class="c k4" style="background:#aedbdb">0.72</i>
<i class="c k5" style="background:#a9e3e3">0.70</i>
</div>
<div class="rw" style="top:376px">
<div class="h rh"><b>402</b></div>
<i class="c k0" style="background:#d39a9a">0.88</i>
<i class="c k1" style="background:#c9abab">0.84</i>
<i class="c k2" style="background:#b2d3d3">0.74</i>
<i class="c k3" style="background:#a9e3e3">0.70</i>
<i class="c k4" style="background:#a5ebeb">0.68</i>
<i class="c k5" style="background:#a0f3f3">0.66</i>
</div>
<div class="rw" style="top:406px">
<div class="h rh"><b>498</b></div>
<i class="c k0" style="background:#cea2a2">0.86</i>
<i class="c k1" style="background:#c2b7b7">0.81</i>
<i class="c k2" style="background:#aedbdb">0.72</i>
<i class="c k3" style="background:#a5ebeb">0.68</i>
<i class="c k4" style="background:#a0f3f3">0.66</i>
<i class="c k5" style="background:#99ffff">0.63</i>
</div>
<div class="rw" style="top:436px">
<div class="h rh"><b>702</b></div>
<i class="c k0" style="background:#cea2a2">0.86</i>
<i class="c k1" style="background:#c2b7b7">0.81</i>
<i class="c k2" style="background:#aedbdb">0.72</i>
<i class="c k3" style="background:#a5ebeb">0.68</i>
<i class="c k4" style="background:#a0f3f3">0.66</i>
<i class="c k5" style="background:#99ffff">0.63</i>
</div>
<div class="sb1"></div><div class="sb2" style="height:38px"></div>
<svg style="left:686.0px;top:509.0px;" width="16" height="16" viewBox="0 0 16 16"><rect x="12" y="0" width="4" height="4" fill="#c4c4c4"/><rect x="6" y="6" width="4" height="4" fill="#c4c4c4"/><rect x="12" y="6" width="4" height="4" fill="#c4c4c4"/><rect x="0" y="12" width="4" height="4" fill="#c4c4c4"/><rect x="6" y="12" width="4" height="4" fill="#c4c4c4"/><rect x="12" y="12" width="4" height="4" fill="#c4c4c4"/></svg>
</div>
<div class="bd"></div>
</div>
<div class="cw" style="left:1470px;top:604px;height:607px">
<svg style="left:18.5px;top:25.0px;" width="32" height="24" viewBox="0 0 32 24"><rect x="2.0" y="0" width="3.0" height="24" fill="#000"/><rect x="7.0" y="0" width="3.0" height="24" fill="#000"/><rect x="12.0" y="0" width="3.0" height="24" fill="#000"/><rect x="17.0" y="0" width="3.0" height="24" fill="#000"/><rect x="22.0" y="0" width="3.0" height="24" fill="#000"/><rect x="27.0" y="0" width="3.0" height="24" fill="#000"/><rect x="0" y="4.8" width="32" height="14.4" fill="#000"/></svg>
<span class="t" style="left:59.5px;top:26px;font-size:24.5px;color:#a7b3c0;letter-spacing:-0.79px;">HS 2-&gt;3</span>
<div class="xb"></div>
<svg style="left:672.5px;top:26.5px;" width="24" height="18" viewBox="0 0 24 18"><path d="M3.5 3 L20.5 15 M20.5 3 L3.5 15" stroke="#5f6878" stroke-width="7.4"/><path d="M3.5 3 L20.5 15 M20.5 3 L3.5 15" stroke="#fafcfe" stroke-width="4.2"/></svg>
<div class="cl" style="height:532px">
<div class="gp" style="top:4px;height:40px"></div><div class="gp" style="top:54px;height:41px"></div>
<svg style="left:25.5px;top:12.0px;" width="28" height="28" viewBox="0 0 28 28"><rect x="0" y="0" width="28" height="28" fill="#000"/><rect x="2" y="2" width="24" height="24" fill="#8a7a2c"/><rect x="5" y="2" width="17" height="12" fill="#fff"/><rect x="6" y="17" width="18" height="9" fill="#000"/><rect x="17" y="19" width="5" height="6" fill="#fff"/><rect x="24" y="3" width="2" height="2" fill="#fff"/></svg>
<svg style="left:73.5px;top:14.0px;" width="22" height="26" viewBox="0 0 22 26"><path d="M2 1 L20 25 M20 1 L2 25" stroke="#f00000" stroke-width="4.2" fill="none"/></svg>
<svg style="left:117.5px;top:14.0px;" width="28" height="26" viewBox="0 0 28 26"><path d="M1 0 V25 H28" stroke="#000" stroke-width="2" stroke-dasharray="2 2" fill="none"/><path d="M1 8 L6 14 L10 13 L13 17 L16 11 L19 14 L22 16 L25 12 L27 7" stroke="#e00000" stroke-width="2" fill="none"/></svg>
<svg style="left:161.5px;top:9.0px;" width="33" height="30" viewBox="0 0 33 30"><path d="M16.5 2 V28 M7 28.6 H27 M5 7.6 H28" stroke="#000" stroke-width="2.7" fill="none"/><path d="M6 7.6 L1 15.5 M6 7.6 L11.5 15.5 M27 7.6 L21.5 15.5 M27 7.6 L32 15.5" stroke="#000" stroke-width="1.4" fill="none"/><path d="M0.6 15.5 H12 L10.5 19.5 Q6.3 22.5 2.1 19.5 Z M21 15.5 H32.4 L30.9 19.5 Q26.7 22.5 22.5 19.5 Z" fill="#e6e02a" stroke="#000" stroke-width="1.3"/><circle cx="16.5" cy="3.2" r="2.4" fill="#000"/></svg>
<svg style="left:209.5px;top:10.0px;" width="28" height="30" viewBox="0 0 28 30"><path d="M2 2 H22 V8 H7 V21 H22 V26 H2 Z" fill="#1a10e0"/><path d="M13.5 1.5 L2.5 28 M13.5 1.5 L25.5 28 M0 28.3 H28" stroke="#000" stroke-width="3.5" fill="none"/></svg>
<svg style="left:243.5px;top:22.0px;" width="14" height="8" viewBox="0 0 14 8"><path d="M0 0 H14 L7 8 Z" fill="#222"/></svg>
<svg style="left:270.5px;top:12.0px;" width="34" height="29" viewBox="0 0 34 29"><path d="M4 1 L20 26 M20 1 L4 26" stroke="#b4b4b4" stroke-width="4" fill="none"/><path d="M18 27 L26 16 L33 27 Z" fill="#b4b4b4"/><path d="M2 27 H33" stroke="#b4b4b4" stroke-width="2.5"/></svg>
<svg style="left:320.0px;top:12.0px;" width="30" height="29" viewBox="0 0 30 29"><path d="M2 2 L9 13 V28 M16 2 L9 13" stroke="#b4b4b4" stroke-width="4" fill="none"/><path d="M22 28 V8" stroke="#b4b4b4" stroke-width="4.5"/><path d="M14 13 L22 0 L30 13 Z" fill="#b4b4b4"/></svg>
<span class="t" style="left:28.2px;top:65px;font-size:21.5px;color:#000;letter-spacing:0.12px;">Function:</span>
<div class="cb"></div>
<span class="t" style="left:133.5px;top:66px;font-size:21.5px;color:#000;letter-spacing:0.92px;">Offset (+/-)</span>
<svg style="left:308.5px;top:69.0px;" width="18" height="12" viewBox="0 0 18 12"><path d="M1.5 2 L9 9.5 L16.5 2" stroke="#444" stroke-width="1.8" fill="none"/></svg>
<span class="t" style="left:351.0px;top:65px;font-size:21.5px;color:#000;letter-spacing:-0.14px;">Value:</span>
<div class="vi"></div>
<span class="t" style="left:425.5px;top:66px;font-size:21.5px;color:#000;letter-spacing:-0.30px;">1.0</span>
<div class="eb"></div>
<span class="t" style="left:520.5px;top:66px;font-size:21.5px;color:#000;letter-spacing:0.04px;">Execute</span>
<div class="tf"></div><div class="dg"></div><div class="dk1"></div><div class="dk2"></div><div class="tc"></div>
<span class="t" style="left:307.0px;top:112px;font-size:22px;color:#0a0a0a;letter-spacing:1.24px;font-weight:bold;">HS 2-&gt;3</span>
<div class="h rh" style="top:136px"></div>
<div class="h k0 sel" style="top:136px"><b style="top:4px">992</b></div>
<div class="h k1" style="top:136px"><b style="top:4px">1728</b></div>
<div class="h k2" style="top:136px"><b style="top:4px">2496</b></div>
<div class="h k3" style="top:136px"><b style="top:4px">3200</b></div>
<div class="h k4" style="top:136px"><b style="top:4px">4000</b></div>
<div class="h k5" style="top:136px"><b style="top:4px">4992</b></div>
<div class="rw" style="top:166px">
<div class="h rh sel"><b>-72</b></div>
<i class="c k0 sc">1.00</i>
<i class="c k1" style="background:#fc5252">1.05</i>
<i class="c k2" style="background:#fc5252">1.05</i>
<i class="c k3" style="background:#fc5252">1.05</i>
<i class="c k4" style="background:#fc5252">1.05</i>
<i class="c k5" style="background:#fc5252">1.05</i>
</div>
<div class="rw" style="top:196px">
<div class="h rh"><b>-18</b></div>
<i class="c k0" style="background:#ef6868">1.00</i>
<i class="c k1" style="background:#ef6868">1.00</i>
<i class="c k2" style="background:#ef6868">1.00</i>
<i class="c k3" style="background:#ef6868">1.00</i>
<i class="c k4" style="background:#ef6868">1.00</i>
<i class="c k5" style="background:#ef6868">1.00</i>
</div>
<div class="rw" style="top:226px">
<div class="h rh"><b></b></div>
<i class="c k0" style="background:#ea7171">0.98</i>
<i class="c k1" style="background:#e87575">0.97</i>
<i class="c k2" style="background:#e57a7a">0.96</i>
<i class="c k3" style="background:#e57a7a">0.96</i>
<i class="c k4" style="background:#e57a7a">0.96</i>
<i class="c k5" style="background:#e57a7a">0.96</i>
</div>
<div class="rw" style="top:256px">
<div class="h rh"><b>48</b></div>
<i class="c k0" style="background:#e37e7e">0.95</i>
<i class="c k1" style="background:#db8c8c">0.92</i>
<i class="c k2" style="background:#d89090">0.91</i>
<i class="c k3" style="background:#d69595">0.90</i>
<i class="c k4" style="background:#d69595">0.90</i>
<i class="c k5" style="background:#d69595">0.90</i>
</div>
<div class="rw" style="top:286px">
<div class="h rh"><b>102</b></div>
<i class="c k0" style="background:#d89090">0.91</i>
<i class="c k1" style="background:#d39999">0.89</i>
<i class="c k2" style="background:#cca6a6">0.86</i>
<i class="c k3" style="background:#c7afaf">0.84</i>
<i class="c k4" style="background:#c7afaf">0.84</i>
<i class="c k5" style="background:#c7afaf">0.84</i>
</div>
<div class="rw" style="top:316px">
<div class="h rh"><b>198</b></div>
<i class="c k0" style="background:#d39999">0.89</i>
<i class="c k1" style="background:#c9abab">0.85</i>
<i class="c k2" style="background:#c2b8b8">0.82</i>
<i class="c k3" style="background:#bac5c5">0.79</i>
<i class="c k4" style="background:#b5cece">0.77</i>
<i class="c k5" style="background:#b0d7d7">0.75</i>
</div>
<div class="rw" style="top:346px">
<div class="h rh"><b>300</b></div>
<i class="c k0" style="background:#d19d9d">0.88</i>
<i class="c k1" style="background:#bdc1c1">0.80</i>
<i class="c k2" style="background:#bac5c5">0.79</i>
<i class="c k3" style="background:#b2d3d3">0.76</i>
<i class="c k4" style="background:#abe0e0">0.73</i>
<i class="c k5" style="background:#a6e9e9">0.71</i>
</div>
<div class="rw" style="top:376px">
<div class="h rh"><b>402</b></div>
<i class="c k0" style="background:#cca6a6">0.86</i>
<i class="c k1" style="background:#b7caca">0.78</i>
<i class="c k2" style="background:#b7caca">0.78</i>
<i class="c k3" style="background:#b0d7d7">0.75</i>
<i class="c k4" style="background:#a6e9e9">0.71</i>
<i class="c k5" style="background:#9ef6f6">0.68</i>
</div>
<div class="rw" style="top:406px">
<div class="h rh"><b>498</b></div>
<i class="c k0" style="background:#c7afaf">0.84</i>
<i class="c k1" style="background:#b5cece">0.77</i>
<i class="c k2" style="background:#b5cece">0.77</i>
<i class="c k3" style="background:#addcdc">0.74</i>
<i class="c k4" style="background:#a3eded">0.70</i>
<i class="c k5" style="background:#99ffff">0.66</i>
</div>
<div class="rw" style="top:436px">
<div class="h rh"><b>702</b></div>
<i class="c k0" style="background:#c7afaf">0.84</i>
<i class="c k1" style="background:#b5cece">0.77</i>
<i class="c k2" style="background:#b5cece">0.77</i>
<i class="c k3" style="background:#abe0e0">0.73</i>
<i class="c k4" style="background:#a3eded">0.70</i>
<i class="c k5" style="background:#99ffff">0.66</i>
</div>
<div class="sb1"></div><div class="sb2" style="height:42px"></div>
<svg style="left:686.0px;top:513.0px;" width="16" height="16" viewBox="0 0 16 16"><rect x="12" y="0" width="4" height="4" fill="#c4c4c4"/><rect x="6" y="6" width="4" height="4" fill="#c4c4c4"/><rect x="12" y="6" width="4" height="4" fill="#c4c4c4"/><rect x="0" y="12" width="4" height="4" fill="#c4c4c4"/><rect x="6" y="12" width="4" height="4" fill="#c4c4c4"/><rect x="12" y="12" width="4" height="4" fill="#c4c4c4"/></svg>
</div>
<div class="bd"></div>
</div>
<div class="cw" style="left:2204px;top:602px;height:609px">
<svg style="left:18.5px;top:25.0px;" width="32" height="24" viewBox="0 0 32 24"><rect x="2.0" y="0" width="3.0" height="24" fill="#000"/><rect x="7.0" y="0" width="3.0" height="24" fill="#000"/><rect x="12.0" y="0" width="3.0" height="24" fill="#000"/><rect x="17.0" y="0" width="3.0" height="24" fill="#000"/><rect x="22.0" y="0" width="3.0" height="24" fill="#000"/><rect x="27.0" y="0" width="3.0" height="24" fill="#000"/><rect x="0" y="4.8" width="32" height="14.4" fill="#000"/></svg>
<span class="t" style="left:59.5px;top:26px;font-size:24.5px;color:#a7b3c0;letter-spacing:-0.79px;">HS 3-&gt;4</span>
<div class="xb"></div>
<svg style="left:672.5px;top:26.5px;" width="24" height="18" viewBox="0 0 24 18"><path d="M3.5 3 L20.5 15 M20.5 3 L3.5 15" stroke="#5f6878" stroke-width="7.4"/><path d="M3.5 3 L20.5 15 M20.5 3 L3.5 15" stroke="#fafcfe" stroke-width="4.2"/></svg>
<div class="cl" style="height:534px">
<div class="gp" style="top:4px;height:40px"></div><div class="gp" style="top:54px;height:41px"></div>
<svg style="left:25.5px;top:12.0px;" width="28" height="28" viewBox="0 0 28 28"><rect x="0" y="0" width="28" height="28" fill="#000"/><rect x="2" y="2" width="24" height="24" fill="#8a7a2c"/><rect x="5" y="2" width="17" height="12" fill="#fff"/><rect x="6" y="17" width="18" height="9" fill="#000"/><rect x="17" y="19" width="5" height="6" fill="#fff"/><rect x="24" y="3" width="2" height="2" fill="#fff"/></svg>
<svg style="left:73.5px;top:14.0px;" width="22" height="26" viewBox="0 0 22 26"><path d="M2 1 L20 25 M20 1 L2 25" stroke="#f00000" stroke-width="4.2" fill="none"/></svg>
<svg style="left:117.5px;top:14.0px;" width="28" height="26" viewBox="0 0 28 26"><path d="M1 0 V25 H28" stroke="#000" stroke-width="2" stroke-dasharray="2 2" fill="none"/><path d="M1 8 L6 14 L10 13 L13 17 L16 11 L19 14 L22 16 L25 12 L27 7" stroke="#e00000" stroke-width="2" fill="none"/></svg>
<svg style="left:161.5px;top:9.0px;" width="33" height="30" viewBox="0 0 33 30"><path d="M16.5 2 V28 M7 28.6 H27 M5 7.6 H28" stroke="#000" stroke-width="2.7" fill="none"/><path d="M6 7.6 L1 15.5 M6 7.6 L11.5 15.5 M27 7.6 L21.5 15.5 M27 7.6 L32 15.5" stroke="#000" stroke-width="1.4" fill="none"/><path d="M0.6 15.5 H12 L10.5 19.5 Q6.3 22.5 2.1 19.5 Z M21 15.5 H32.4 L30.9 19.5 Q26.7 22.5 22.5 19.5 Z" fill="#e6e02a" stroke="#000" stroke-width="1.3"/><circle cx="16.5" cy="3.2" r="2.4" fill="#000"/></svg>
<svg style="left:209.5px;top:10.0px;" width="28" height="30" viewBox="0 0 28 30"><path d="M2 2 H22 V8 H7 V21 H22 V26 H2 Z" fill="#1a10e0"/><path d="M13.5 1.5 L2.5 28 M13.5 1.5 L25.5 28 M0 28.3 H28" stroke="#000" stroke-width="3.5" fill="none"/></svg>
<svg style="left:243.5px;top:22.0px;" width="14" height="8" viewBox="0 0 14 8"><path d="M0 0 H14 L7 8 Z" fill="#222"/></svg>
<svg style="left:270.5px;top:12.0px;" width="34" height="29" viewBox="0 0 34 29"><path d="M4 1 L20 26 M20 1 L4 26" stroke="#b4b4b4" stroke-width="4" fill="none"/><path d="M18 27 L26 16 L33 27 Z" fill="#b4b4b4"/><path d="M2 27 H33" stroke="#b4b4b4" stroke-width="2.5"/></svg>
<svg style="left:320.0px;top:12.0px;" width="30" height="29" viewBox="0 0 30 29"><path d="M2 2 L9 13 V28 M16 2 L9 13" stroke="#b4b4b4" stroke-width="4" fill="none"/><path d="M22 28 V8" stroke="#b4b4b4" stroke-width="4.5"/><path d="M14 13 L22 0 L30 13 Z" fill="#b4b4b4"/></svg>
<span class="t" style="left:28.2px;top:65px;font-size:21.5px;color:#000;letter-spacing:0.12px;">Function:</span>
<div class="cb"></div>
<span class="t" style="left:133.5px;top:66px;font-size:21.5px;color:#000;letter-spacing:0.92px;">Offset (+/-)</span>
<svg style="left:308.5px;top:69.0px;" width="18" height="12" viewBox="0 0 18 12"><path d="M1.5 2 L9 9.5 L16.5 2" stroke="#444" stroke-width="1.8" fill="none"/></svg>
<span class="t" style="left:351.0px;top:65px;font-size:21.5px;color:#000;letter-spacing:-0.14px;">Value:</span>
<div class="vi"></div>
<span class="t" style="left:425.5px;top:66px;font-size:21.5px;color:#000;letter-spacing:-0.30px;">1.0</span>
<div class="eb"></div>
<span class="t" style="left:520.5px;top:66px;font-size:21.5px;color:#000;letter-spacing:0.04px;">Execute</span>
<div class="tf"></div><div class="dg"></div><div class="dk1"></div><div class="dk2"></div><div class="tc"></div>
<span class="t" style="left:307.0px;top:112px;font-size:22px;color:#0a0a0a;letter-spacing:1.24px;font-weight:bold;">HS 3-&gt;4</span>
<div class="h rh" style="top:136px"></div>
<div class="h k0 sel" style="top:136px"><b style="top:4px">992</b></div>
<div class="h k1" style="top:136px"><b style="top:4px">1728</b></div>
<div class="h k2" style="top:136px"><b style="top:4px">2496</b></div>
<div class="h k3" style="top:136px"><b style="top:4px">3200</b></div>
<div class="h k4" style="top:136px"><b style="top:4px">4000</b></div>
<div class="h k5" style="top:136px"><b style="top:4px">4992</b></div>
<div class="rw" style="top:166px">
<div class="h rh sel"><b>-72</b></div>
<i class="c k0 sc">1.00</i>
<i class="c k1" style="background:#fc5252">1.05</i>
<i class="c k2" style="background:#fc5252">1.05</i>
<i class="c k3" style="background:#fc5252">1.05</i>
<i class="c k4" style="background:#fc5252">1.05</i>
<i class="c k5" style="background:#fc5252">1.05</i>
</div>
<div class="rw" style="top:196px">
<div class="h rh"><b>-18</b></div>
<i class="c k0" style="background:#ed6c6c">1.00</i>
<i class="c k1" style="background:#ed6c6c">1.00</i>
<i class="c k2" style="background:#ed6c6c">1.00</i>
<i class="c k3" style="background:#ed6c6c">1.00</i>
<i class="c k4" style="background:#ed6c6c">1.00</i>
<i class="c k5" style="background:#ed6c6c">1.00</i>
</div>
<div class="rw" style="top:226px">
<div class="h rh"><b></b></div>
<i class="c k0" style="background:#e77777">0.98</i>
<i class="c k1" style="background:#e18181">0.96</i>
<i class="c k2" style="background:#de8686">0.95</i>
<i class="c k3" style="background:#de8686">0.95</i>
<i class="c k4" style="background:#de8686">0.95</i>
<i class="c k5" style="background:#de8686">0.95</i>
</div>
<div class="rw" style="top:256px">
<div class="h rh"><b>48</b></div>
<i class="c k0" style="background:#e77777">0.98</i>
<i class="c k1" style="background:#de8686">0.95</i>
<i class="c k2" style="background:#d29b9b">0.91</i>
<i class="c k3" style="background:#cfa1a1">0.90</i>
<i class="c k4" style="background:#cca6a6">0.89</i>
<i class="c k5" style="background:#c9abab">0.88</i>
</div>
<div class="rw" style="top:286px">
<div class="h rh"><b>102</b></div>
<i class="c k0" style="background:#e18181">0.96</i>
<i class="c k1" style="background:#d59696">0.92</i>
<i class="c k2" style="background:#cca6a6">0.89</i>
<i class="c k3" style="background:#c6b0b0">0.87</i>
<i class="c k4" style="background:#c3b6b6">0.86</i>
<i class="c k5" style="background:#c0bbbb">0.85</i>
</div>
<div class="rw" style="top:316px">
<div class="h rh"><b>198</b></div>
<i class="c k0" style="background:#d89191">0.93</i>
<i class="c k1" style="background:#cca6a6">0.89</i>
<i class="c k2" style="background:#c9abab">0.88</i>
<i class="c k3" style="background:#c0bbbb">0.85</i>
<i class="c k4" style="background:#bac5c5">0.83</i>
<i class="c k5" style="background:#b4d0d0">0.81</i>
</div>
<div class="rw" style="top:346px">
<div class="h rh"><b>300</b></div>
<i class="c k0" style="background:#d29b9b">0.91</i>
<i class="c k1" style="background:#bdc0c0">0.84</i>
<i class="c k2" style="background:#bac5c5">0.83</i>
<i class="c k3" style="background:#b4d0d0">0.81</i>
<i class="c k4" style="background:#aedada">0.79</i>
<i class="c k5" style="background:#a8e5e5">0.77</i>
</div>
<div class="rw" style="top:376px">
<div class="h rh"><b>402</b></div>
<i class="c k0" style="background:#c9abab">0.88</i>
<i class="c k1" style="background:#b7cbcb">0.82</i>
<i class="c k2" style="background:#b4d0d0">0.81</i>
<i class="c k3" style="background:#b1d5d5">0.80</i>
<i class="c k4" style="background:#a8e5e5">0.77</i>
<i class="c k5" style="background:#a2efef">0.75</i>
</div>
<div class="rw" style="top:406px">
<div class="h rh"><b>498</b></div>
<i class="c k0" style="background:#c6b0b0">0.87</i>
<i class="c k1" style="background:#b1d5d5">0.80</i>
<i class="c k2" style="background:#b1d5d5">0.80</i>
<i class="c k3" style="background:#abe0e0">0.78</i>
<i class="c k4" style="background:#a2efef">0.75</i>
<i class="c k5" style="background:#9cfafa">0.73</i>
</div>
<div class="rw" style="top:436px">
<div class="h rh"><b>702</b></div>
<i class="c k0" style="background:#c0bbbb">0.85</i>
<i class="c k1" style="background:#b4d0d0">0.81</i>
<i class="c k2" style="background:#abe0e0">0.78</i>
<i class="c k3" style="background:#a8e5e5">0.77</i>
<i class="c k4" style="background:#9ff5f5">0.74</i>
<i class="c k5" style="background:#99ffff">0.72</i>
</div>
<div class="sb1"></div><div class="sb2" style="height:44px"></div>
<svg style="left:686.0px;top:515.0px;" width="16" height="16" viewBox="0 0 16 16"><rect x="12" y="0" width="4" height="4" fill="#c4c4c4"/><rect x="6" y="6" width="4" height="4" fill="#c4c4c4"/><rect x="12" y="6" width="4" height="4" fill="#c4c4c4"/><rect x="0" y="12" width="4" height="4" fill="#c4c4c4"/><rect x="6" y="12" width="4" height="4" fill="#c4c4c4"/><rect x="12" y="12" width="4" height="4" fill="#c4c4c4"/></svg>
</div>
<div class="bd"></div>
</div>
<div class="cw" style="left:4px;top:1195px;height:603px">
<svg style="left:18.5px;top:25.0px;" width="32" height="24" viewBox="0 0 32 24"><rect x="2.0" y="0" width="3.0" height="24" fill="#000"/><rect x="7.0" y="0" width="3.0" height="24" fill="#000"/><rect x="12.0" y="0" width="3.0" height="24" fill="#000"/><rect x="17.0" y="0" width="3.0" height="24" fill="#000"/><rect x="22.0" y="0" width="3.0" height="24" fill="#000"/><rect x="27.0" y="0" width="3.0" height="24" fill="#000"/><rect x="0" y="4.8" width="32" height="14.4" fill="#000"/></svg>
<span class="t" style="left:59.5px;top:26px;font-size:24.5px;color:#a7b3c0;letter-spacing:-0.79px;">HS 4-&gt;5</span>
<div class="xb"></div>
<svg style="left:672.5px;top:26.5px;" width="24" height="18" viewBox="0 0 24 18"><path d="M3.5 3 L20.5 15 M20.5 3 L3.5 15" stroke="#5f6878" stroke-width="7.4"/><path d="M3.5 3 L20.5 15 M20.5 3 L3.5 15" stroke="#fafcfe" stroke-width="4.2"/></svg>
<div class="cl" style="height:528px">
<div class="gp" style="top:4px;height:40px"></div><div class="gp" style="top:54px;height:41px"></div>
<svg style="left:25.5px;top:12.0px;" width="28" height="28" viewBox="0 0 28 28"><rect x="0" y="0" width="28" height="28" fill="#000"/><rect x="2" y="2" width="24" height="24" fill="#8a7a2c"/><rect x="5" y="2" width="17" height="12" fill="#fff"/><rect x="6" y="17" width="18" height="9" fill="#000"/><rect x="17" y="19" width="5" height="6" fill="#fff"/><rect x="24" y="3" width="2" height="2" fill="#fff"/></svg>
<svg style="left:73.5px;top:14.0px;" width="22" height="26" viewBox="0 0 22 26"><path d="M2 1 L20 25 M20 1 L2 25" stroke="#f00000" stroke-width="4.2" fill="none"/></svg>
<svg style="left:117.5px;top:14.0px;" width="28" height="26" viewBox="0 0 28 26"><path d="M1 0 V25 H28" stroke="#000" stroke-width="2" stroke-dasharray="2 2" fill="none"/><path d="M1 8 L6 14 L10 13 L13 17 L16 11 L19 14 L22 16 L25 12 L27 7" stroke="#e00000" stroke-width="2" fill="none"/></svg>
<svg style="left:161.5px;top:9.0px;" width="33" height="30" viewBox="0 0 33 30"><path d="M16.5 2 V28 M7 28.6 H27 M5 7.6 H28" stroke="#000" stroke-width="2.7" fill="none"/><path d="M6 7.6 L1 15.5 M6 7.6 L11.5 15.5 M27 7.6 L21.5 15.5 M27 7.6 L32 15.5" stroke="#000" stroke-width="1.4" fill="none"/><path d="M0.6 15.5 H12 L10.5 19.5 Q6.3 22.5 2.1 19.5 Z M21 15.5 H32.4 L30.9 19.5 Q26.7 22.5 22.5 19.5 Z" fill="#e6e02a" stroke="#000" stroke-width="1.3"/><circle cx="16.5" cy="3.2" r="2.4" fill="#000"/></svg>
<svg style="left:209.5px;top:10.0px;" width="28" height="30" viewBox="0 0 28 30"><path d="M2 2 H22 V8 H7 V21 H22 V26 H2 Z" fill="#1a10e0"/><path d="M13.5 1.5 L2.5 28 M13.5 1.5 L25.5 28 M0 28.3 H28" stroke="#000" stroke-width="3.5" fill="none"/></svg>
<svg style="left:243.5px;top:22.0px;" width="14" height="8" viewBox="0 0 14 8"><path d="M0 0 H14 L7 8 Z" fill="#222"/></svg>
<svg style="left:270.5px;top:12.0px;" width="34" height="29" viewBox="0 0 34 29"><path d="M4 1 L20 26 M20 1 L4 26" stroke="#b4b4b4" stroke-width="4" fill="none"/><path d="M18 27 L26 16 L33 27 Z" fill="#b4b4b4"/><path d="M2 27 H33" stroke="#b4b4b4" stroke-width="2.5"/></svg>
<svg style="left:320.0px;top:12.0px;" width="30" height="29" viewBox="0 0 30 29"><path d="M2 2 L9 13 V28 M16 2 L9 13" stroke="#b4b4b4" stroke-width="4" fill="none"/><path d="M22 28 V8" stroke="#b4b4b4" stroke-width="4.5"/><path d="M14 13 L22 0 L30 13 Z" fill="#b4b4b4"/></svg>
<span class="t" style="left:28.2px;top:65px;font-size:21.5px;color:#000;letter-spacing:0.12px;">Function:</span>
<div class="cb"></div>
<span class="t" style="left:133.5px;top:66px;font-size:21.5px;color:#000;letter-spacing:0.92px;">Offset (+/-)</span>
<svg style="left:308.5px;top:69.0px;" width="18" height="12" viewBox="0 0 18 12"><path d="M1.5 2 L9 9.5 L16.5 2" stroke="#444" stroke-width="1.8" fill="none"/></svg>
<span class="t" style="left:351.0px;top:65px;font-size:21.5px;color:#000;letter-spacing:-0.14px;">Value:</span>
<div class="vi"></div>
<span class="t" style="left:425.5px;top:66px;font-size:21.5px;color:#000;letter-spacing:-0.30px;">1.0</span>
<div class="eb"></div>
<span class="t" style="left:520.5px;top:66px;font-size:21.5px;color:#000;letter-spacing:0.04px;">Execute</span>
<div class="tf"></div><div class="dg"></div><div class="dk1"></div><div class="dk2"></div><div class="tc"></div>
<span class="t" style="left:307.0px;top:112px;font-size:22px;color:#0a0a0a;letter-spacing:1.24px;font-weight:bold;">HS 4-&gt;5</span>
<div class="h rh" style="top:136px"></div>
<div class="h k0 sel" style="top:136px"><b style="top:4px">992</b></div>
<div class="h k1" style="top:136px"><b style="top:4px">1728</b></div>
<div class="h k2" style="top:136px"><b style="top:4px">2496</b></div>
<div class="h k3" style="top:136px"><b style="top:4px">3200</b></div>
<div class="h k4" style="top:136px"><b style="top:4px">4000</b></div>
<div class="h k5" style="top:136px"><b style="top:4px">4992</b></div>
<div class="rw" style="top:166px">
<div class="h rh sel"><b>-72</b></div>
<i class="c k0 sc">1.00</i>
<i class="c k1" style="background:#fc5252">1.05</i>
<i class="c k2" style="background:#fc5252">1.05</i>
<i class="c k3" style="background:#fc5252">1.05</i>
<i class="c k4" style="background:#fc5252">1.05</i>
<i class="c k5" style="background:#fc5252">1.05</i>
</div>
<div class="rw" style="top:196px">
<div class="h rh"><b>-18</b></div>
<i class="c k0" style="background:#ef6969">1.00</i>
<i class="c k1" style="background:#ef6969">1.00</i>
<i class="c k2" style="background:#ef6969">1.00</i>
<i class="c k3" style="background:#ef6969">1.00</i>
<i class="c k4" style="background:#ef6969">1.00</i>
<i class="c k5" style="background:#ef6969">1.00</i>
</div>
<div class="rw" style="top:226px">
<div class="h rh"><b></b></div>
<i class="c k0" style="background:#e97373">0.98</i>
<i class="c k1" style="background:#e47c7c">0.96</i>
<i class="c k2" style="background:#e18181">0.95</i>
<i class="c k3" style="background:#e18181">0.95</i>
<i class="c k4" style="background:#df8585">0.94</i>
<i class="c k5" style="background:#df8585">0.94</i>
</div>
<div class="rw" style="top:256px">
<div class="h rh"><b>48</b></div>
<i class="c k0" style="background:#e77777">0.97</i>
<i class="c k1" style="background:#e18181">0.95</i>
<i class="c k2" style="background:#d98f8f">0.92</i>
<i class="c k3" style="background:#d79393">0.91</i>
<i class="c k4" style="background:#d19d9d">0.89</i>
<i class="c k5" style="background:#d19d9d">0.89</i>
</div>
<div class="rw" style="top:286px">
<div class="h rh"><b>102</b></div>
<i class="c k0" style="background:#e47c7c">0.96</i>
<i class="c k1" style="background:#df8585">0.94</i>
<i class="c k2" style="background:#d79393">0.91</i>
<i class="c k3" style="background:#cfa1a1">0.88</i>
<i class="c k4" style="background:#cca6a6">0.87</i>
<i class="c k5" style="background:#cca6a6">0.87</i>
</div>
<div class="rw" style="top:316px">
<div class="h rh"><b>198</b></div>
<i class="c k0" style="background:#df8585">0.94</i>
<i class="c k1" style="background:#d49898">0.90</i>
<i class="c k2" style="background:#c6b0b0">0.85</i>
<i class="c k3" style="background:#c1b9b9">0.83</i>
<i class="c k4" style="background:#bebebe">0.82</i>
<i class="c k5" style="background:#bcc2c2">0.81</i>
</div>
<div class="rw" style="top:346px">
<div class="h rh"><b>300</b></div>
<i class="c k0" style="background:#d79393">0.91</i>
<i class="c k1" style="background:#c9abab">0.86</i>
<i class="c k2" style="background:#c1b9b9">0.83</i>
<i class="c k3" style="background:#b6cccc">0.79</i>
<i class="c k4" style="background:#b4d0d0">0.78</i>
<i class="c k5" style="background:#b1d5d5">0.77</i>
</div>
<div class="rw" style="top:376px">
<div class="h rh"><b>402</b></div>
<i class="c k0" style="background:#d19d9d">0.89</i>
<i class="c k1" style="background:#c4b4b4">0.84</i>
<i class="c k2" style="background:#b9c7c7">0.80</i>
<i class="c k3" style="background:#aedada">0.76</i>
<i class="c k4" style="background:#a9e3e3">0.74</i>
<i class="c k5" style="background:#a6e8e8">0.73</i>
</div>
<div class="rw" style="top:406px">
<div class="h rh"><b>498</b></div>
<i class="c k0" style="background:#cfa1a1">0.88</i>
<i class="c k1" style="background:#bebebe">0.82</i>
<i class="c k2" style="background:#b6cccc">0.79</i>
<i class="c k3" style="background:#aedada">0.76</i>
<i class="c k4" style="background:#a6e8e8">0.73</i>
<i class="c k5" style="background:#9ef6f6">0.70</i>
</div>
<div class="rw" style="top:436px">
<div class="h rh"><b>702</b></div>
<i class="c k0" style="background:#c6b0b0">0.85</i>
<i class="c k1" style="background:#b6cccc">0.79</i>
<i class="c k2" style="background:#aedada">0.76</i>
<i class="c k3" style="background:#a6e8e8">0.73</i>
<i class="c k4" style="background:#9ef6f6">0.70</i>
<i class="c k5" style="background:#99ffff">0.68</i>
</div>
<div class="sb1"></div><div class="sb2" style="height:38px"></div>
<svg style="left:686.0px;top:509.0px;" width="16" height="16" viewBox="0 0 16 16"><rect x="12" y="0" width="4" height="4" fill="#c4c4c4"/><rect x="6" y="6" width="4" height="4" fill="#c4c4c4"/><rect x="12" y="6" width="4" height="4" fill="#c4c4c4"/><rect x="0" y="12" width="4" height="4" fill="#c4c4c4"/><rect x="6" y="12" width="4" height="4" fill="#c4c4c4"/><rect x="12" y="12" width="4" height="4" fill="#c4c4c4"/></svg>
</div>
<div class="bd"></div>
</div>
<div class="cw" style="left:740px;top:1210px;height:603px">
<svg style="left:18.5px;top:25.0px;" width="32" height="24" viewBox="0 0 32 24"><rect x="2.0" y="0" width="3.0" height="24" fill="#000"/><rect x="7.0" y="0" width="3.0" height="24" fill="#000"/><rect x="12.0" y="0" width="3.0" height="24" fill="#000"/><rect x="17.0" y="0" width="3.0" height="24" fill="#000"/><rect x="22.0" y="0" width="3.0" height="24" fill="#000"/><rect x="27.0" y="0" width="3.0" height="24" fill="#000"/><rect x="0" y="4.8" width="32" height="14.4" fill="#000"/></svg>
<span class="t" style="left:59.5px;top:26px;font-size:24.5px;color:#a7b3c0;letter-spacing:-0.79px;">HS 5-&gt;6</span>
<div class="xb"></div>
<svg style="left:672.5px;top:26.5px;" width="24" height="18" viewBox="0 0 24 18"><path d="M3.5 3 L20.5 15 M20.5 3 L3.5 15" stroke="#5f6878" stroke-width="7.4"/><path d="M3.5 3 L20.5 15 M20.5 3 L3.5 15" stroke="#fafcfe" stroke-width="4.2"/></svg>
<div class="cl" style="height:528px">
<div class="gp" style="top:4px;height:40px"></div><div class="gp" style="top:54px;height:41px"></div>
<svg style="left:25.5px;top:12.0px;" width="28" height="28" viewBox="0 0 28 28"><rect x="0" y="0" width="28" height="28" fill="#000"/><rect x="2" y="2" width="24" height="24" fill="#8a7a2c"/><rect x="5" y="2" width="17" height="12" fill="#fff"/><rect x="6" y="17" width="18" height="9" fill="#000"/><rect x="17" y="19" width="5" height="6" fill="#fff"/><rect x="24" y="3" width="2" height="2" fill="#fff"/></svg>
<svg style="left:73.5px;top:14.0px;" width="22" height="26" viewBox="0 0 22 26"><path d="M2 1 L20 25 M20 1 L2 25" stroke="#f00000" stroke-width="4.2" fill="none"/></svg>
<svg style="left:117.5px;top:14.0px;" width="28" height="26" viewBox="0 0 28 26"><path d="M1 0 V25 H28" stroke="#000" stroke-width="2" stroke-dasharray="2 2" fill="none"/><path d="M1 8 L6 14 L10 13 L13 17 L16 11 L19 14 L22 16 L25 12 L27 7" stroke="#e00000" stroke-width="2" fill="none"/></svg>
<svg style="left:161.5px;top:9.0px;" width="33" height="30" viewBox="0 0 33 30"><path d="M16.5 2 V28 M7 28.6 H27 M5 7.6 H28" stroke="#000" stroke-width="2.7" fill="none"/><path d="M6 7.6 L1 15.5 M6 7.6 L11.5 15.5 M27 7.6 L21.5 15.5 M27 7.6 L32 15.5" stroke="#000" stroke-width="1.4" fill="none"/><path d="M0.6 15.5 H12 L10.5 19.5 Q6.3 22.5 2.1 19.5 Z M21 15.5 H32.4 L30.9 19.5 Q26.7 22.5 22.5 19.5 Z" fill="#e6e02a" stroke="#000" stroke-width="1.3"/><circle cx="16.5" cy="3.2" r="2.4" fill="#000"/></svg>
<svg style="left:209.5px;top:10.0px;" width="28" height="30" viewBox="0 0 28 30"><path d="M2 2 H22 V8 H7 V21 H22 V26 H2 Z" fill="#1a10e0"/><path d="M13.5 1.5 L2.5 28 M13.5 1.5 L25.5 28 M0 28.3 H28" stroke="#000" stroke-width="3.5" fill="none"/></svg>
<svg style="left:243.5px;top:22.0px;" width="14" height="8" viewBox="0 0 14 8"><path d="M0 0 H14 L7 8 Z" fill="#222"/></svg>
<svg style="left:270.5px;top:12.0px;" width="34" height="29" viewBox="0 0 34 29"><path d="M4 1 L20 26 M20 1 L4 26" stroke="#b4b4b4" stroke-width="4" fill="none"/><path d="M18 27 L26 16 L33 27 Z" fill="#b4b4b4"/><path d="M2 27 H33" stroke="#b4b4b4" stroke-width="2.5"/></svg>
<svg style="left:320.0px;top:12.0px;" width="30" height="29" viewBox="0 0 30 29"><path d="M2 2 L9 13 V28 M16 2 L9 13" stroke="#b4b4b4" stroke-width="4" fill="none"/><path d="M22 28 V8" stroke="#b4b4b4" stroke-width="4.5"/><path d="M14 13 L22 0 L30 13 Z" fill="#b4b4b4"/></svg>
<span class="t" style="left:28.2px;top:65px;font-size:21.5px;color:#000;letter-spacing:0.12px;">Function:</span>
<div class="cb"></div>
<span class="t" style="left:133.5px;top:66px;font-size:21.5px;color:#000;letter-spacing:0.92px;">Offset (+/-)</span>
<svg style="left:308.5px;top:69.0px;" width="18" height="12" viewBox="0 0 18 12"><path d="M1.5 2 L9 9.5 L16.5 2" stroke="#444" stroke-width="1.8" fill="none"/></svg>
<span class="t" style="left:351.0px;top:65px;font-size:21.5px;color:#000;letter-spacing:-0.14px;">Value:</span>
<div class="vi"></div>
<span class="t" style="left:425.5px;top:66px;font-size:21.5px;color:#000;letter-spacing:-0.30px;">1.0</span>
<div class="eb"></div>
<span class="t" style="left:520.5px;top:66px;font-size:21.5px;color:#000;letter-spacing:0.04px;">Execute</span>
<div class="tf"></div><div class="dg"></div><div class="dk1"></div><div class="dk2"></div><div class="tc"></div>
<span class="t" style="left:307.0px;top:112px;font-size:22px;color:#0a0a0a;letter-spacing:1.24px;font-weight:bold;">HS 5-&gt;6</span>
<div class="h rh" style="top:136px"></div>
<div class="h k0 sel" style="top:136px"><b style="top:4px">992</b></div>
<div class="h k1" style="top:136px"><b style="top:4px">1728</b></div>
<div class="h k2" style="top:136px"><b style="top:4px">2496</b></div>
<div class="h k3" style="top:136px"><b style="top:4px">3200</b></div>
<div class="h k4" style="top:136px"><b style="top:4px">4000</b></div>
<div class="h k5" style="top:136px"><b style="top:4px">4992</b></div>
<div class="rw" style="top:166px">
<div class="h rh sel"><b>-72</b></div>
<i class="c k0 sc">1.00</i>
<i class="c k1" style="background:#fc5252">1.05</i>
<i class="c k2" style="background:#fc5252">1.05</i>
<i class="c k3" style="background:#fc5252">1.05</i>
<i class="c k4" style="background:#fc5252">1.05</i>
<i class="c k5" style="background:#fc5252">1.05</i>
</div>
<div class="rw" style="top:196px">
<div class="h rh"><b>-18</b></div>
<i class="c k0" style="background:#ec6f6f">1.00</i>
<i class="c k1" style="background:#ec6f6f">1.00</i>
<i class="c k2" style="background:#ec6f6f">1.00</i>
<i class="c k3" style="background:#ec6f6f">1.00</i>
<i class="c k4" style="background:#ec6f6f">1.00</i>
<i class="c k5" style="background:#ec6f6f">1.00</i>
</div>
<div class="rw" style="top:226px">
<div class="h rh"><b></b></div>
<i class="c k0" style="background:#e87575">0.99</i>
<i class="c k1" style="background:#e87575">0.99</i>
<i class="c k2" style="background:#e87575">0.99</i>
<i class="c k3" style="background:#e87575">0.99</i>
<i class="c k4" style="background:#e87575">0.99</i>
<i class="c k5" style="background:#e87575">0.99</i>
</div>
<div class="rw" style="top:256px">
<div class="h rh"><b>48</b></div>
<i class="c k0" style="background:#e28080">0.97</i>
<i class="c k1" style="background:#e28080">0.97</i>
<i class="c k2" style="background:#de8686">0.96</i>
<i class="c k3" style="background:#de8686">0.96</i>
<i class="c k4" style="background:#de8686">0.96</i>
<i class="c k5" style="background:#de8686">0.96</i>
</div>
<div class="rw" style="top:286px">
<div class="h rh"><b>102</b></div>
<i class="c k0" style="background:#db8c8c">0.95</i>
<i class="c k1" style="background:#cea3a3">0.91</i>
<i class="c k2" style="background:#caa8a8">0.90</i>
<i class="c k3" style="background:#c7aeae">0.89</i>
<i class="c k4" style="background:#cea3a3">0.91</i>
<i class="c k5" style="background:#cea3a3">0.91</i>
</div>
<div class="rw" style="top:316px">
<div class="h rh"><b>198</b></div>
<i class="c k0" style="background:#cea3a3">0.91</i>
<i class="c k1" style="background:#c4b4b4">0.88</i>
<i class="c k2" style="background:#c1baba">0.87</i>
<i class="c k3" style="background:#bdc0c0">0.86</i>
<i class="c k4" style="background:#bdc0c0">0.86</i>
<i class="c k5" style="background:#bac5c5">0.85</i>
</div>
<div class="rw" style="top:346px">
<div class="h rh"><b>300</b></div>
<i class="c k0" style="background:#c7aeae">0.89</i>
<i class="c k1" style="background:#b7cbcb">0.84</i>
<i class="c k2" style="background:#b3d1d1">0.83</i>
<i class="c k3" style="background:#b0d7d7">0.82</i>
<i class="c k4" style="background:#addcdc">0.81</i>
<i class="c k5" style="background:#aae2e2">0.80</i>
</div>
<div class="rw" style="top:376px">
<div class="h rh"><b>402</b></div>
<i class="c k0" style="background:#c4b4b4">0.88</i>
<i class="c k1" style="background:#b3d1d1">0.83</i>
<i class="c k2" style="background:#b0d7d7">0.82</i>
<i class="c k3" style="background:#addcdc">0.81</i>
<i class="c k4" style="background:#a6e8e8">0.79</i>
<i class="c k5" style="background:#a0f3f3">0.77</i>
</div>
<div class="rw" style="top:406px">
<div class="h rh"><b>498</b></div>
<i class="c k0" style="background:#c1baba">0.87</i>
<i class="c k1" style="background:#addcdc">0.81</i>
<i class="c k2" style="background:#aae2e2">0.80</i>
<i class="c k3" style="background:#aae2e2">0.80</i>
<i class="c k4" style="background:#a0f3f3">0.77</i>
<i class="c k5" style="background:#99ffff">0.75</i>
</div>
<div class="rw" style="top:436px">
<div class="h rh"><b>702</b></div>
<i class="c k0" style="background:#c1baba">0.87</i>
<i class="c k1" style="background:#addcdc">0.81</i>
<i class="c k2" style="background:#aae2e2">0.80</i>
<i class="c k3" style="background:#aae2e2">0.80</i>
<i class="c k4" style="background:#a0f3f3">0.77</i>
<i class="c k5" style="background:#99ffff">0.75</i>
</div>
<div class="sb1"></div><div class="sb2" style="height:38px"></div>
<svg style="left:686.0px;top:509.0px;" width="16" height="16" viewBox="0 0 16 16"><rect x="12" y="0" width="4" height="4" fill="#c4c4c4"/><rect x="6" y="6" width="4" height="4" fill="#c4c4c4"/><rect x="12" y="6" width="4" height="4" fill="#c4c4c4"/><rect x="0" y="12" width="4" height="4" fill="#c4c4c4"/><rect x="6" y="12" width="4" height="4" fill="#c4c4c4"/><rect x="12" y="12" width="4" height="4" fill="#c4c4c4"/></svg>
</div>
<div class="bd"></div>
</div>
<div class="cw" style="left:1474px;top:1210px;height:603px">
<svg style="left:18.5px;top:25.0px;" width="32" height="24" viewBox="0 0 32 24"><rect x="2.0" y="0" width="3.0" height="24" fill="#000"/><rect x="7.0" y="0" width="3.0" height="24" fill="#000"/><rect x="12.0" y="0" width="3.0" height="24" fill="#000"/><rect x="17.0" y="0" width="3.0" height="24" fill="#000"/><rect x="22.0" y="0" width="3.0" height="24" fill="#000"/><rect x="27.0" y="0" width="3.0" height="24" fill="#000"/><rect x="0" y="4.8" width="32" height="14.4" fill="#000"/></svg>
<span class="t" style="left:59.5px;top:26px;font-size:24.5px;color:#a7b3c0;letter-spacing:-0.79px;">HS 1-&gt;2</span>
<div class="xb"></div>
<svg style="left:672.5px;top:26.5px;" width="24" height="18" viewBox="0 0 24 18"><path d="M3.5 3 L20.5 15 M20.5 3 L3.5 15" stroke="#5f6878" stroke-width="7.4"/><path d="M3.5 3 L20.5 15 M20.5 3 L3.5 15" stroke="#fafcfe" stroke-width="4.2"/></svg>
<div class="cl" style="height:528px">
<div class="gp" style="top:4px;height:40px"></div><div class="gp" style="top:54px;height:41px"></div>
<svg style="left:25.5px;top:12.0px;" width="28" height="28" viewBox="0 0 28 28"><rect x="0" y="0" width="28" height="28" fill="#000"/><rect x="2" y="2" width="24" height="24" fill="#8a7a2c"/><rect x="5" y="2" width="17" height="12" fill="#fff"/><rect x="6" y="17" width="18" height="9" fill="#000"/><rect x="17" y="19" width="5" height="6" fill="#fff"/><rect x="24" y="3" width="2" height="2" fill="#fff"/></svg>
<svg style="left:73.5px;top:14.0px;" width="22" height="26" viewBox="0 0 22 26"><path d="M2 1 L20 25 M20 1 L2 25" stroke="#f00000" stroke-width="4.2" fill="none"/></svg>
<svg style="left:117.5px;top:14.0px;" width="28" height="26" viewBox="0 0 28 26"><path d="M1 0 V25 H28" stroke="#000" stroke-width="2" stroke-dasharray="2 2" fill="none"/><path d="M1 8 L6 14 L10 13 L13 17 L16 11 L19 14 L22 16 L25 12 L27 7" stroke="#e00000" stroke-width="2" fill="none"/></svg>
<svg style="left:161.5px;top:9.0px;" width="33" height="30" viewBox="0 0 33 30"><path d="M16.5 2 V28 M7 28.6 H27 M5 7.6 H28" stroke="#000" stroke-width="2.7" fill="none"/><path d="M6 7.6 L1 15.5 M6 7.6 L11.5 15.5 M27 7.6 L21.5 15.5 M27 7.6 L32 15.5" stroke="#000" stroke-width="1.4" fill="none"/><path d="M0.6 15.5 H12 L10.5 19.5 Q6.3 22.5 2.1 19.5 Z M21 15.5 H32.4 L30.9 19.5 Q26.7 22.5 22.5 19.5 Z" fill="#e6e02a" stroke="#000" stroke-width="1.3"/><circle cx="16.5" cy="3.2" r="2.4" fill="#000"/></svg>
<svg style="left:209.5px;top:10.0px;" width="28" height="30" viewBox="0 0 28 30"><path d="M2 2 H22 V8 H7 V21 H22 V26 H2 Z" fill="#1a10e0"/><path d="M13.5 1.5 L2.5 28 M13.5 1.5 L25.5 28 M0 28.3 H28" stroke="#000" stroke-width="3.5" fill="none"/></svg>
<svg style="left:243.5px;top:22.0px;" width="14" height="8" viewBox="0 0 14 8"><path d="M0 0 H14 L7 8 Z" fill="#222"/></svg>
<svg style="left:270.5px;top:12.0px;" width="34" height="29" viewBox="0 0 34 29"><path d="M4 1 L20 26 M20 1 L4 26" stroke="#b4b4b4" stroke-width="4" fill="none"/><path d="M18 27 L26 16 L33 27 Z" fill="#b4b4b4"/><path d="M2 27 H33" stroke="#b4b4b4" stroke-width="2.5"/></svg>
<svg style="left:320.0px;top:12.0px;" width="30" height="29" viewBox="0 0 30 29"><path d="M2 2 L9 13 V28 M16 2 L9 13" stroke="#b4b4b4" stroke-width="4" fill="none"/><path d="M22 28 V8" stroke="#b4b4b4" stroke-width="4.5"/><path d="M14 13 L22 0 L30 13 Z" fill="#b4b4b4"/></svg>
<span class="t" style="left:28.2px;top:65px;font-size:21.5px;color:#000;letter-spacing:0.12px;">Function:</span>
<div class="cb"></div>
<span class="t" style="left:133.5px;top:66px;font-size:21.5px;color:#000;letter-spacing:0.92px;">Offset (+/-)</span>
<svg style="left:308.5px;top:69.0px;" width="18" height="12" viewBox="0 0 18 12"><path d="M1.5 2 L9 9.5 L16.5 2" stroke="#444" stroke-width="1.8" fill="none"/></svg>
<span class="t" style="left:351.0px;top:65px;font-size:21.5px;color:#000;letter-spacing:-0.14px;">Value:</span>
<div class="vi"></div>
<span class="t" style="left:425.5px;top:66px;font-size:21.5px;color:#000;letter-spacing:-0.30px;">1.0</span>
<div class="eb"></div>
<span class="t" style="left:520.5px;top:66px;font-size:21.5px;color:#000;letter-spacing:0.04px;">Execute</span>
<div class="tf"></div><div class="dg"></div><div class="dk1"></div><div class="dk2"></div><div class="tc"></div>
<span class="t" style="left:307.0px;top:112px;font-size:22px;color:#0a0a0a;letter-spacing:1.24px;font-weight:bold;">HS 1-&gt;2</span>
<div class="h rh" style="top:136px"></div>
<div class="h k0 sel" style="top:136px"><b style="top:4px">992</b></div>
<div class="h k1" style="top:136px"><b style="top:4px">1728</b></div>
<div class="h k2" style="top:136px"><b style="top:4px">2496</b></div>
<div class="h k3" style="top:136px"><b style="top:4px">3200</b></div>
<div class="h k4" style="top:136px"><b style="top:4px">4000</b></div>
<div class="h k5" style="top:136px"><b style="top:4px">4992</b></div>
<div class="rw" style="top:166px">
<div class="h rh sel"><b>-72</b></div>
<i class="c k0 sc">1.00</i>
<i class="c k1" style="background:#fa5555">1.07</i>
<i class="c k2" style="background:#fc5252">1.08</i>
<i class="c k3" style="background:#fc5252">1.08</i>
<i class="c k4" style="background:#fc5252">1.08</i>
<i class="c k5" style="background:#fc5252">1.08</i>
</div>
<div class="rw" style="top:196px">
<div class="h rh"><b>-18</b></div>
<i class="c k0" style="background:#ee6b6b">1.00</i>
<i class="c k1" style="background:#ee6b6b">1.00</i>
<i class="c k2" style="background:#ee6b6b">1.00</i>
<i class="c k3" style="background:#ee6b6b">1.00</i>
<i class="c k4" style="background:#ee6b6b">1.00</i>
<i class="c k5" style="background:#ee6b6b">1.00</i>
</div>
<div class="rw" style="top:226px">
<div class="h rh"><b></b></div>
<i class="c k0" style="background:#ec6e6e">0.99</i>
<i class="c k1" style="background:#ea7171">0.98</i>
<i class="c k2" style="background:#e57b7b">0.95</i>
<i class="c k3" style="background:#e57b7b">0.95</i>
<i class="c k4" style="background:#e37e7e">0.94</i>
<i class="c k5" style="background:#e37e7e">0.94</i>
</div>
<div class="rw" style="top:256px">
<div class="h rh"><b>48</b></div>
<i class="c k0" style="background:#e57b7b">0.95</i>
<i class="c k1" style="background:#e37e7e">0.94</i>
<i class="c k2" style="background:#df8484">0.92</i>
<i class="c k3" style="background:#dc8b8b">0.90</i>
<i class="c k4" style="background:#dc8b8b">0.90</i>
<i class="c k5" style="background:#dc8b8b">0.90</i>
</div>
<div class="rw" style="top:286px">
<div class="h rh"><b>102</b></div>
<i class="c k0" style="background:#e37e7e">0.94</i>
<i class="c k1" style="background:#dd8787">0.91</i>
<i class="c k2" style="background:#d89191">0.88</i>
<i class="c k3" style="background:#d19d9d">0.84</i>
<i class="c k4" style="background:#d19d9d">0.84</i>
<i class="c k5" style="background:#d19d9d">0.84</i>
</div>
<div class="rw" style="top:316px">
<div class="h rh"><b>198</b></div>
<i class="c k0" style="background:#dc8b8b">0.90</i>
<i class="c k1" style="background:#d69494">0.87</i>
<i class="c k2" style="background:#cfa1a1">0.83</i>
<i class="c k3" style="background:#c8adad">0.79</i>
<i class="c k4" style="background:#c1baba">0.75</i>
<i class="c k5" style="background:#b8caca">0.70</i>
</div>
<div class="rw" style="top:346px">
<div class="h rh"><b>300</b></div>
<i class="c k0" style="background:#d69494">0.87</i>
<i class="c k1" style="background:#d19d9d">0.84</i>
<i class="c k2" style="background:#c8adad">0.79</i>
<i class="c k3" style="background:#c1baba">0.75</i>
<i class="c k4" style="background:#b8caca">0.70</i>
<i class="c k5" style="background:#afd9d9">0.65</i>
</div>
<div class="rw" style="top:376px">
<div class="h rh"><b>402</b></div>
<i class="c k0" style="background:#d19d9d">0.84</i>
<i class="c k1" style="background:#caaaaa">0.80</i>
<i class="c k2" style="background:#c2b7b7">0.76</i>
<i class="c k3" style="background:#b9c6c6">0.71</i>
<i class="c k4" style="background:#b0d6d6">0.66</i>
<i class="c k5" style="background:#a7e6e6">0.61</i>
</div>
<div class="rw" style="top:406px">
<div class="h rh"><b>498</b></div>
<i class="c k0" style="background:#cda4a4">0.82</i>
<i class="c k1" style="background:#c4b4b4">0.77</i>
<i class="c k2" style="background:#bbc3c3">0.72</i>
<i class="c k3" style="background:#b2d3d3">0.67</i>
<i class="c k4" style="background:#abe0e0">0.63</i>
<i class="c k5" style="background:#a0f2f2">0.57</i>
</div>
<div class="rw" style="top:436px">
<div class="h rh"><b>702</b></div>
<i class="c k0" style="background:#cda4a4">0.82</i>
<i class="c k1" style="background:#c4b4b4">0.77</i>
<i class="c k2" style="background:#b6cdcd">0.69</i>
<i class="c k3" style="background:#addcdc">0.64</i>
<i class="c k4" style="background:#a4ecec">0.59</i>
<i class="c k5" style="background:#99ffff">0.53</i>
</div>
<div class="sb1"></div><div class="sb2" style="height:38px"></div>
<svg style="left:686.0px;top:509.0px;" width="16" height="16" viewBox="0 0 16 16"><rect x="12" y="0" width="4" height="4" fill="#c4c4c4"/><rect x="6" y="6" width="4" height="4" fill="#c4c4c4"/><rect x="12" y="6" width="4" height="4" fill="#c4c4c4"/><rect x="0" y="12" width="4" height="4" fill="#c4c4c4"/><rect x="6" y="12" width="4" height="4" fill="#c4c4c4"/><rect x="12" y="12" width="4" height="4" fill="#c4c4c4"/></svg>
</div>
<div class="bd"></div>
</div>
<div class="cw act" style="left:2208px;top:1210px;height:603px">
<svg style="left:18.5px;top:25.0px;" width="32" height="24" viewBox="0 0 32 24"><rect x="2.0" y="0" width="3.0" height="24" fill="#000"/><rect x="7.0" y="0" width="3.0" height="24" fill="#000"/><rect x="12.0" y="0" width="3.0" height="24" fill="#000"/><rect x="17.0" y="0" width="3.0" height="24" fill="#000"/><rect x="22.0" y="0" width="3.0" height="24" fill="#000"/><rect x="27.0" y="0" width="3.0" height="24" fill="#000"/><rect x="0" y="4.8" width="32" height="14.4" fill="#000"/></svg>
<span class="t" style="left:59.5px;top:26px;font-size:24.5px;color:#1c1c1c;letter-spacing:-0.79px;">HS 2-&gt;3</span>
<div class="xb"></div>
<svg style="left:672.5px;top:26.5px;" width="24" height="18" viewBox="0 0 24 18"><path d="M3.5 3 L20.5 15 M20.5 3 L3.5 15" stroke="#5f6878" stroke-width="7.4"/><path d="M3.5 3 L20.5 15 M20.5 3 L3.5 15" stroke="#fafcfe" stroke-width="4.2"/></svg>
<div class="cl" style="height:528px">
<div class="gp" style="top:4px;height:40px"></div><div class="gp" style="top:54px;height:41px"></div>
<svg style="left:25.5px;top:12.0px;" width="28" height="28" viewBox="0 0 28 28"><rect x="0" y="0" width="28" height="28" fill="#000"/><rect x="2" y="2" width="24" height="24" fill="#8a7a2c"/><rect x="5" y="2" width="17" height="12" fill="#fff"/><rect x="6" y="17" width="18" height="9" fill="#000"/><rect x="17" y="19" width="5" height="6" fill="#fff"/><rect x="24" y="3" width="2" height="2" fill="#fff"/></svg>
<svg style="left:73.5px;top:14.0px;" width="22" height="26" viewBox="0 0 22 26"><path d="M2 1 L20 25 M20 1 L2 25" stroke="#f00000" stroke-width="4.2" fill="none"/></svg>
<svg style="left:117.5px;top:14.0px;" width="28" height="26" viewBox="0 0 28 26"><path d="M1 0 V25 H28" stroke="#000" stroke-width="2" stroke-dasharray="2 2" fill="none"/><path d="M1 8 L6 14 L10 13 L13 17 L16 11 L19 14 L22 16 L25 12 L27 7" stroke="#e00000" stroke-width="2" fill="none"/></svg>
<svg style="left:161.5px;top:9.0px;" width="33" height="30" viewBox="0 0 33 30"><path d="M16.5 2 V28 M7 28.6 H27 M5 7.6 H28" stroke="#000" stroke-width="2.7" fill="none"/><path d="M6 7.6 L1 15.5 M6 7.6 L11.5 15.5 M27 7.6 L21.5 15.5 M27 7.6 L32 15.5" stroke="#000" stroke-width="1.4" fill="none"/><path d="M0.6 15.5 H12 L10.5 19.5 Q6.3 22.5 2.1 19.5 Z M21 15.5 H32.4 L30.9 19.5 Q26.7 22.5 22.5 19.5 Z" fill="#e6e02a" stroke="#000" stroke-width="1.3"/><circle cx="16.5" cy="3.2" r="2.4" fill="#000"/></svg>
<svg style="left:209.5px;top:10.0px;" width="28" height="30" viewBox="0 0 28 30"><path d="M2 2 H22 V8 H7 V21 H22 V26 H2 Z" fill="#1a10e0"/><path d="M13.5 1.5 L2.5 28 M13.5 1.5 L25.5 28 M0 28.3 H28" stroke="#000" stroke-width="3.5" fill="none"/></svg>
<svg style="left:243.5px;top:22.0px;" width="14" height="8" viewBox="0 0 14 8"><path d="M0 0 H14 L7 8 Z" fill="#222"/></svg>
<svg style="left:270.5px;top:12.0px;" width="34" height="29" viewBox="0 0 34 29"><path d="M4 1 L20 26 M20 1 L4 26" stroke="#b4b4b4" stroke-width="4" fill="none"/><path d="M18 27 L26 16 L33 27 Z" fill="#b4b4b4"/><path d="M2 27 H33" stroke="#b4b4b4" stroke-width="2.5"/></svg>
<svg style="left:320.0px;top:12.0px;" width="30" height="29" viewBox="0 0 30 29"><path d="M2 2 L9 13 V28 M16 2 L9 13" stroke="#b4b4b4" stroke-width="4" fill="none"/><path d="M22 28 V8" stroke="#b4b4b4" stroke-width="4.5"/><path d="M14 13 L22 0 L30 13 Z" fill="#b4b4b4"/></svg>
<span class="t" style="left:28.2px;top:65px;font-size:21.5px;color:#000;letter-spacing:0.12px;">Function:</span>
<div class="cb"></div>
<span class="t" style="left:133.5px;top:66px;font-size:21.5px;color:#000;letter-spacing:0.92px;">Offset (+/-)</span>
<svg style="left:308.5px;top:69.0px;" width="18" height="12" viewBox="0 0 18 12"><path d="M1.5 2 L9 9.5 L16.5 2" stroke="#444" stroke-width="1.8" fill="none"/></svg>
<span class="t" style="left:351.0px;top:65px;font-size:21.5px;color:#000;letter-spacing:-0.14px;">Value:</span>
<div class="vi"></div>
<span class="t" style="left:425.5px;top:66px;font-size:21.5px;color:#000;letter-spacing:-0.30px;">1.0</span>
<div class="eb"></div>
<span class="t" style="left:520.5px;top:66px;font-size:21.5px;color:#000;letter-spacing:0.04px;">Execute</span>
<div class="tf"></div><div class="dg"></div><div class="dk1"></div><div class="dk2"></div><div class="tc"></div>
<span class="t" style="left:307.0px;top:112px;font-size:22px;color:#0a0a0a;letter-spacing:1.24px;font-weight:bold;">HS 2-&gt;3</span>
<div class="h rh" style="top:136px"></div>
<div class="h k0 sel" style="top:136px"><b style="top:4px">992</b></div>
<div class="h k1" style="top:136px"><b style="top:4px">1728</b></div>
<div class="h k2" style="top:136px"><b style="top:4px">2496</b></div>
<div class="h k3" style="top:136px"><b style="top:4px">3200</b></div>
<div class="h k4" style="top:136px"><b style="top:4px">4000</b></div>
<div class="h k5" style="top:136px"><b style="top:4px">4992</b></div>
<div class="rw" style="top:166px">
<div class="h rh sel"><b>-72</b></div>
<i class="c k0 sc">1.00</i>
<i class="c k1" style="background:#fa5656">1.06</i>
<i class="c k2" style="background:#fc5252">1.07</i>
<i class="c k3" style="background:#fc5252">1.07</i>
<i class="c k4" style="background:#fc5252">1.07</i>
<i class="c k5" style="background:#fc5252">1.07</i>
</div>
<div class="rw" style="top:196px">
<div class="h rh"><b>-18</b></div>
<i class="c k0" style="background:#ee6b6b">1.00</i>
<i class="c k1" style="background:#ee6b6b">1.00</i>
<i class="c k2" style="background:#ee6b6b">1.00</i>
<i class="c k3" style="background:#ee6b6b">1.00</i>
<i class="c k4" style="background:#ee6b6b">1.00</i>
<i class="c k5" style="background:#ee6b6b">1.00</i>
</div>
<div class="rw" style="top:226px">
<div class="h rh"><b></b></div>
<i class="c k0" style="background:#ec6e6e">0.99</i>
<i class="c k1" style="background:#ea7272">0.98</i>
<i class="c k2" style="background:#e67979">0.96</i>
<i class="c k3" style="background:#e67979">0.96</i>
<i class="c k4" style="background:#e47c7c">0.95</i>
<i class="c k5" style="background:#e47c7c">0.95</i>
</div>
<div class="rw" style="top:256px">
<div class="h rh"><b>48</b></div>
<i class="c k0" style="background:#e47c7c">0.95</i>
<i class="c k1" style="background:#de8787">0.92</i>
<i class="c k2" style="background:#da8e8e">0.90</i>
<i class="c k3" style="background:#da8e8e">0.90</i>
<i class="c k4" style="background:#d89292">0.89</i>
<i class="c k5" style="background:#d69595">0.88</i>
</div>
<div class="rw" style="top:286px">
<div class="h rh"><b>102</b></div>
<i class="c k0" style="background:#dc8a8a">0.91</i>
<i class="c k1" style="background:#d89292">0.89</i>
<i class="c k2" style="background:#d49999">0.87</i>
<i class="c k3" style="background:#cea3a3">0.84</i>
<i class="c k4" style="background:#c9aaaa">0.82</i>
<i class="c k5" style="background:#c5b1b1">0.80</i>
</div>
<div class="rw" style="top:316px">
<div class="h rh"><b>198</b></div>
<i class="c k0" style="background:#cea3a3">0.84</i>
<i class="c k1" style="background:#cea3a3">0.84</i>
<i class="c k2" style="background:#c5b1b1">0.80</i>
<i class="c k3" style="background:#bfbcbc">0.77</i>
<i class="c k4" style="background:#b9c7c7">0.74</i>
<i class="c k5" style="background:#b3d1d1">0.71</i>
</div>
<div class="rw" style="top:346px">
<div class="h rh"><b>300</b></div>
<i class="c k0" style="background:#c3b5b5">0.79</i>
<i class="c k1" style="background:#c1b8b8">0.78</i>
<i class="c k2" style="background:#b9c7c7">0.74</i>
<i class="c k3" style="background:#b1d5d5">0.70</i>
<i class="c k4" style="background:#abdfdf">0.67</i>
<i class="c k5" style="background:#a5eaea">0.64</i>
</div>
<div class="rw" style="top:376px">
<div class="h rh"><b>402</b></div>
<i class="c k0" style="background:#c3b5b5">0.79</i>
<i class="c k1" style="background:#c1b8b8">0.78</i>
<i class="c k2" style="background:#b5cece">0.72</i>
<i class="c k3" style="background:#afd8d8">0.69</i>
<i class="c k4" style="background:#a7e6e6">0.65</i>
<i class="c k5" style="background:#a1f1f1">0.62</i>
</div>
<div class="rw" style="top:406px">
<div class="h rh"><b>498</b></div>
<i class="c k0" style="background:#c3b5b5">0.79</i>
<i class="c k1" style="background:#c1b8b8">0.78</i>
<i class="c k2" style="background:#b1d5d5">0.70</i>
<i class="c k3" style="background:#a9e3e3">0.66</i>
<i class="c k4" style="background:#a1f1f1">0.62</i>
<i class="c k5" style="background:#9df8f8">0.60</i>
</div>
<div class="rw" style="top:436px">
<div class="h rh"><b>702</b></div>
<i class="c k0" style="background:#c3b5b5">0.79</i>
<i class="c k1" style="background:#c1b8b8">0.78</i>
<i class="c k2" style="background:#a9e3e3">0.66</i>
<i class="c k3" style="background:#a3eded">0.63</i>
<i class="c k4" style="background:#9df8f8">0.60</i>
<i class="c k5" style="background:#99ffff">0.58</i>
</div>
<div class="sb1"></div><div class="sb2" style="height:38px"></div>
<svg style="left:686.0px;top:509.0px;" width="16" height="16" viewBox="0 0 16 16"><rect x="12" y="0" width="4" height="4" fill="#c4c4c4"/><rect x="6" y="6" width="4" height="4" fill="#c4c4c4"/><rect x="12" y="6" width="4" height="4" fill="#c4c4c4"/><rect x="0" y="12" width="4" height="4" fill="#c4c4c4"/><rect x="6" y="12" width="4" height="4" fill="#c4c4c4"/><rect x="12" y="12" width="4" height="4" fill="#c4c4c4"/></svg>
</div>
<div class="bd"></div>
</div>
<div style="left:0;top:0;width:3.5px;height:100%;background:#4c4c4c;"></div>
</div>
<div style="left:3326.0px;top:138.0px;width:1.5px;height:1786.0px;background:#fff;"></div>
<div style="left:3327.5px;top:138.0px;width:12.5px;height:1820.0px;background:#f0f0f0;"></div>
<div style="left:638.0px;top:1923.5px;width:2702.0px;height:34.5px;background:#f0f0f0;"></div>
<div style="left:672.0px;top:1940.0px;width:2365.0px;height:4.0px;background:#858585;border-radius:2px;"></div>
<div style="left:0.0px;top:1957.0px;width:3340.0px;height:19.0px;background:#f0f0f0;"></div>
<div style="left:638.0px;top:1958.0px;width:2702.0px;height:1.5px;background:#dadada;"></div>
<span class="t" style="left:8.0px;top:1974px;font-size:23px;color:#000;letter-spacing:-0.55px;">10x6 Table, Offset: 2D9Eh,  Cell Size: 8 Bit</span>
<svg style="left:0;top:0;pointer-events:none" width="3326" height="1924" viewBox="0 0 3326 1924">
<g opacity="0.8" stroke-linejoin="round" stroke-linecap="round">
 <path d="M2657 1642 V1603 A45 45 0 0 1 2702 1558 H2721 A45 45 0 0 1 2766 1603 V1642" fill="none" stroke="#2b2929" stroke-width="51"/>
 <path d="M2657 1642 V1603 A45 45 0 0 1 2702 1558 H2721 A45 45 0 0 1 2766 1603 V1642" fill="none" stroke="#a3b1ab" stroke-width="23"/>
 <path d="M2579 1638 H2762 Q2797 1642 2798 1690 Q2801 1750 2798 1795 Q2792 1847 2738 1847 H2579 Z" fill="#a3b1ab" stroke="#2b2929" stroke-width="14"/>
 <g stroke="#2b2929" fill="none">
  <circle cx="2718" cy="1706" r="42" stroke-width="17"/>
  <path d="M2678 1738 L2595 1798 M2702 1754 L2612 1843" stroke-width="14"/>
  <path d="M2539 1698 H2594 M2539 1746 H2594 M2539 1795 H2594" stroke-width="14"/>
  <circle cx="2525" cy="1698" r="10" stroke-width="9"/><circle cx="2525" cy="1746" r="10" stroke-width="9"/><circle cx="2525" cy="1795" r="10" stroke-width="9"/>
 </g>
 <rect x="2834" y="1638" width="20" height="212" rx="5" fill="#a3b1ab" stroke="#2b2929" stroke-width="12"/>
</g>
<g opacity="0.8" font-family="'Liberation Sans',sans-serif" font-weight="bold" stroke-linejoin="round">
 <g fill="#332a2a" stroke="#332a2a" stroke-width="23">
 <text x="2872" y="1738" font-size="107" textLength="452" lengthAdjust="spacingAndGlyphs">binunlock</text>
 <text x="2871" y="1808" font-size="91" textLength="190" lengthAdjust="spacingAndGlyphs">.com</text>
 </g>
 <g fill="#a9b6b0" stroke="#a9b6b0" stroke-width="4.5">
 <text x="2872" y="1738" font-size="107" textLength="452" lengthAdjust="spacingAndGlyphs">binunlock</text>
 <text x="2871" y="1808" font-size="91" textLength="190" lengthAdjust="spacingAndGlyphs">.com</text>
 </g>
</g>
</svg></body></html>
